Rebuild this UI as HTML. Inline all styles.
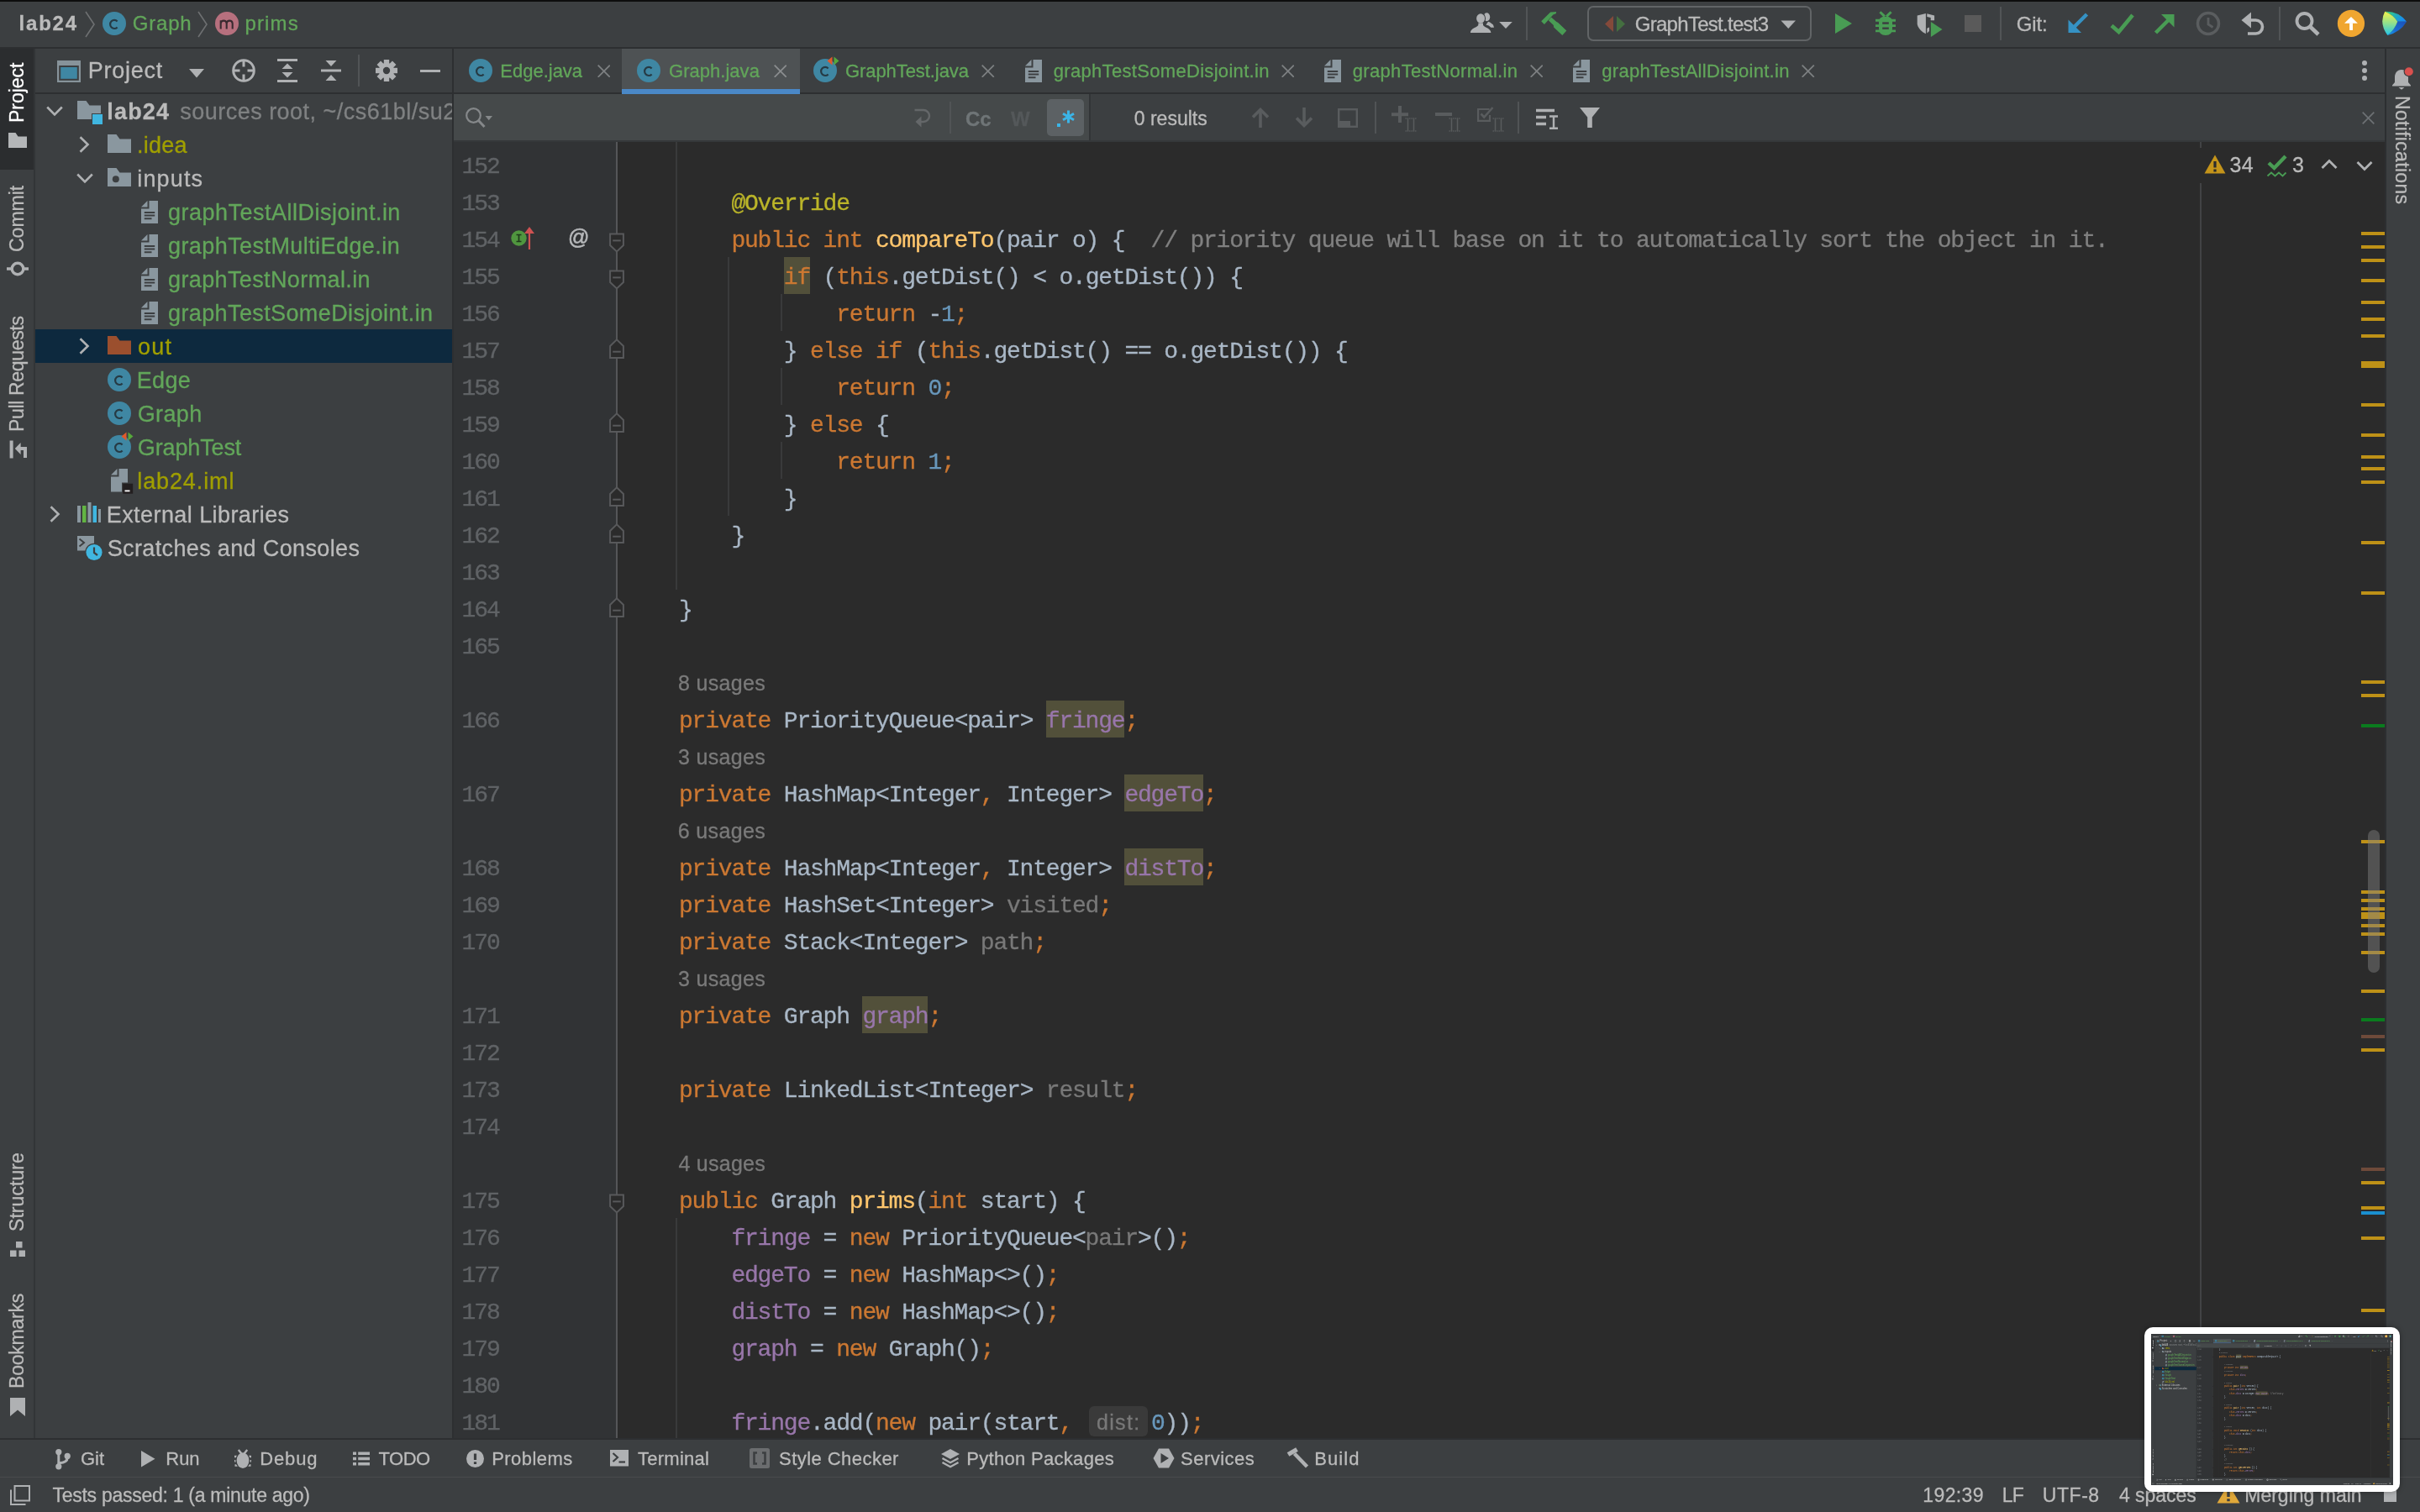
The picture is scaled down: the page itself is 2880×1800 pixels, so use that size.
<!DOCTYPE html>
<html><head><meta charset="utf-8"><title>lab24 - Graph.java</title><style>
html,body{margin:0;padding:0;background:#3c3f41;}
body{width:2880px;height:1800px;position:relative;overflow:hidden;font-family:"Liberation Sans",sans-serif;font-kerning:none;-webkit-font-smoothing:antialiased;}
.r{position:absolute;display:block;}
.t{position:absolute;white-space:pre;font-kerning:none;-webkit-text-stroke:0.3px;}
.ln{letter-spacing:-2.1px !important;margin-left:1.5px;}
.c{position:absolute;white-space:pre;font:28px/44px "Liberation Mono",monospace;letter-spacing:-1.2px;height:44px;-webkit-text-stroke:0.3px currentColor;}
.pg{position:absolute;left:0;top:0;width:2880px;height:1800px;overflow:hidden;will-change:transform;}
</style></head><body>
<div class="pg">
<div class="r" style="left:0.00px;top:0.00px;width:2880.00px;height:1800.00px;background:#3c3f41;"></div>
<div class="r" style="left:0.00px;top:0.00px;width:2880.00px;height:2.00px;background:#0d0d0d;"></div>
<div class="r" style="left:0.00px;top:56.00px;width:2880.00px;height:2.00px;background:#2d2f31;"></div>
<div class="r" style="left:0.00px;top:58.00px;width:40.00px;height:144.00px;background:#2b2d2f;"></div>
<div class="r" style="left:40.00px;top:58.00px;width:2.00px;height:1654.00px;background:#323537;"></div>
<div class="r" style="left:42.00px;top:110.00px;width:496.00px;height:2.00px;background:#2d2f31;"></div>
<div class="r" style="left:538.00px;top:58.00px;width:2.00px;height:1654.00px;background:#2d2f31;"></div>
<div class="r" style="left:540.00px;top:110.00px;width:2298.00px;height:2.00px;background:#2d2f31;"></div>
<div class="r" style="left:740.00px;top:58.00px;width:212.00px;height:48.00px;background:#4e5254;"></div>
<div class="r" style="left:740.00px;top:106.00px;width:212.00px;height:5.50px;background:#4a88c7;"></div>
<div class="r" style="left:540.00px;top:112.00px;width:756.00px;height:56.00px;background:#45494a;"></div>
<div class="r" style="left:1296.00px;top:112.00px;width:2.00px;height:56.00px;background:#323537;"></div>
<div class="r" style="left:540.00px;top:167.00px;width:2298.00px;height:1.50px;background:#35383a;"></div>
<div class="r" style="left:540.00px;top:168.50px;width:2298.00px;height:1543.50px;background:#2b2b2b;"></div>
<div class="r" style="left:540.00px;top:168.50px;width:193.00px;height:1543.50px;background:#313335;"></div>
<div class="r" style="left:733.00px;top:168.50px;width:2.00px;height:1543.50px;background:#555658;"></div>
<div class="r" style="left:2838.00px;top:58.00px;width:2.00px;height:1654.00px;background:#2d2f31;"></div>
<div class="r" style="left:0.00px;top:1712.00px;width:2880.00px;height:2.00px;background:#2d2f31;"></div>
<div class="r" style="left:0.00px;top:1757.50px;width:2880.00px;height:1.50px;background:#494b4d;"></div>
<div class="t" style="left:22.50px;top:15.68px;font:24px/24px 'Liberation Sans',sans-serif;font-weight:bold;letter-spacing:1.812px;color:#bbbbbb;">lab24</div>
<svg class="r" style="left:98.00px;top:10.00px;" width="20" height="40" viewBox="0 0 20 40"><polyline points="4,4 14,19 4,34" fill="none" stroke="#6e7072" stroke-width="1.6"/></svg>
<svg class="r" style="left:122.00px;top:13.50px;" width="28" height="28" viewBox="0 0 28 28"><circle cx="14" cy="14" r="14" fill="#3f87a3"/><path d="M17.600,11.400A4.900,5.100 0 1 0 17.600,18.400" fill="none" stroke="#263a44" stroke-width="2.200"/></svg>
<div class="t" style="left:157.75px;top:15.68px;font:24px/24px 'Liberation Sans',sans-serif;letter-spacing:0.812px;color:#62a65a;">Graph</div>
<svg class="r" style="left:232.00px;top:10.00px;" width="20" height="40" viewBox="0 0 20 40"><polyline points="4,4 14,19 4,34" fill="none" stroke="#6e7072" stroke-width="1.6"/></svg>
<svg class="r" style="left:256.00px;top:13.50px;" width="28" height="28" viewBox="0 0 28 28"><circle cx="14" cy="14" r="14" fill="#b7707e"/><path d="M6.700,20.400V10.200M6.700,13.800C7.200,9.600 13.200,9.600 13.700,13.800V20.400M13.700,13.800C14.200,9.600 20.200,9.600 20.700,13.800V20.400" fill="none" stroke="#3a2a30" stroke-width="2.100"/></svg>
<div class="t" style="left:291.50px;top:15.68px;font:24px/24px 'Liberation Sans',sans-serif;letter-spacing:1.125px;color:#62a65a;">prims</div>
<svg class="r" style="left:1745px;top:10px;" width="60" height="36" viewBox="1745 10 60 36"><ellipse cx="1769.3" cy="20.3" rx="3.9" ry="5" fill="#afb1b3"/><polygon points="1771.1,25.8 1773.1,26.5 1777.0,29.5 1778.0,32.8 1774.4,32.8 1771.7,30.4 1768.4,29.5" fill="#afb1b3" /><ellipse cx="1762.1" cy="22" rx="6" ry="6.6" fill="#3c3f41"/><polygon points="1755.2,30.4 1759.8,28.1 1765.5,28.1 1767.1,30.4 1773.1,33.1 1775.7,39.7 1748.6,39.7 1751.2,33.8" fill="#3c3f41" /><ellipse cx="1762.1" cy="22" rx="5" ry="5.8" fill="#afb1b3"/><path d="M1749.9,38.9 C1750.2,33.8 1757.2,33.1 1759.3,30.1 L1759.3,27.5 L1765.0,27.5 L1765.0,30.1 C1767.1,33.1 1774.0,33.8 1774.4,38.9 Z" fill="#afb1b3"/><polygon points="1784.2,26.0 1799.8,26.0 1792.0,34.1" fill="#afb1b3" /></svg>
<div class="r" style="left:1816.00px;top:8.00px;width:2.00px;height:39.50px;background:#515456;"></div>
<svg class="r" style="left:1830px;top:10px;" width="40" height="36" viewBox="1830 10 40 36"><polygon points="1834.2,25.2 1845.1,14.6 1852.1,13.9 1851.7,16.2 1848.4,17.6 1837.9,29.1" fill="#499c54" /><polygon points="1842.8,24.2 1846.1,20.5 1852.4,26.1 1854.0,26.8 1864.3,36.4 1859.3,42.0 1849.1,32.4 1848.8,30.1" fill="#499c54" /></svg>
<div class="r" style="left:1889px;top:7px;width:266.5px;height:42px;box-sizing:border-box;border:2px solid #616466;border-radius:7px"></div>
<svg class="r" style="left:1908.00px;top:17.00px;" width="28" height="23" viewBox="0 0 28 23"><path d="M2,11.500L12,2V21Z" fill="#84493a"/><path d="M16,2L26,11.500L16,21Z" fill="#446f40"/></svg>
<div class="t" style="left:1945.75px;top:16.68px;font:24px/24px 'Liberation Sans',sans-serif;letter-spacing:-0.714px;color:#bbbbbb;">GraphTest.test3</div>
<svg class="r" style="left:2117.00px;top:22.00px;" width="22" height="14" viewBox="0 0 22 14"><path d="M2.500,2.500h17.500l-8.750,9.500z" fill="#afb1b3"/></svg>
<svg class="r" style="left:2182.00px;top:14.00px;" width="24" height="28" viewBox="0 0 24 28"><path d="M2,2L22,14L2,26Z" fill="#499c54"/></svg>
<svg class="r" style="left:2229.00px;top:13.00px;" width="30" height="30" viewBox="0 0 30 30"><path d="M7,12.500Q7,6.700 15,6.700Q23,6.700 23,12.500V21Q23,29 15,29Q7,29 7,21Z" fill="#499c54"/><path d="M8.400,1.200L13.900,6.600M21.600,1.200L16.100,6.600" stroke="#499c54" stroke-width="3" fill="none"/><path d="M3,11.300H27M3,17.600H27M3,23.900H27" stroke="#499c54" stroke-width="2.900" fill="none"/><rect x="11.200" y="13.300" width="7.600" height="2.500" fill="#3c3f41"/><rect x="11.200" y="19.500" width="7.600" height="2.400" fill="#3c3f41"/></svg>
<svg class="r" style="left:2278px;top:12px;" width="38" height="36" viewBox="2278 12 38 36"><path d="M2291.9,16.0 L2281.7,18.5 L2281.7,28.8 C2282.8,33.8 2286.5,37.9 2291.9,40.2 Z" fill="#afb1b3"/><polygon points="2293.3,16.2 2302.1,18.5 2302.1,24.2 2297.7,24.2 2297.7,20.9 2293.3,20.1" fill="#afb1b3" /><polygon points="2293.3,33.8 2296.0,32.5 2296.0,37.1 2293.3,39.5" fill="#afb1b3" /><polygon points="2297.9,25.9 2311.5,35.0 2297.9,44.1" fill="#499c54" /></svg>
<div class="r" style="left:2338.00px;top:18.00px;width:20.00px;height:20.00px;background:#5a5a5a;"></div>
<div class="r" style="left:2380.00px;top:8.00px;width:2.00px;height:39.50px;background:#515456;"></div>
<div class="t" style="left:2399.75px;top:16.68px;font:24px/24px 'Liberation Sans',sans-serif;letter-spacing:-0.167px;color:#bbbbbb;">Git:</div>
<svg class="r" style="left:2458.00px;top:13.00px;" width="30" height="30" viewBox="0 0 30 30"><path d="M25.500,4L6,23.500" stroke="#3592c4" stroke-width="4.400" fill="none"/><path d="M3.500,26V10.500L7.500,14.500L14.500,21.500L19,26Z" fill="#3592c4"/></svg>
<svg class="r" style="left:2509.00px;top:13.00px;" width="34" height="30" viewBox="0 0 34 30"><polyline points="4,17.500 12.500,25 29,5" stroke="#499c54" stroke-width="4.600" fill="none"/></svg>
<svg class="r" style="left:2561.00px;top:13.00px;" width="30" height="30" viewBox="0 0 30 30"><path d="M4.500,26L24,6.500" stroke="#499c54" stroke-width="4.400" fill="none"/><path d="M26.500,4V19.500L22.500,15.500L15.500,8.500L11,4Z" fill="#499c54"/></svg>
<svg class="r" style="left:2612.00px;top:11.50px;" width="32" height="32" viewBox="0 0 32 32"><circle cx="16" cy="16" r="12.500" fill="none" stroke="#5a5d5f" stroke-width="3.500"/><path d="M16,9V17L21.500,20.500" stroke="#5a5d5f" stroke-width="2.800" fill="none"/></svg>
<svg class="r" style="left:2664.00px;top:12.00px;" width="34" height="32" viewBox="0 0 34 32"><path d="M15,2.500L3.500,12L15,21.500Z" fill="#afb1b3"/><path d="M12,12H20.500a8,8 0 0 1 0,16H11" stroke="#afb1b3" stroke-width="3.600" fill="none"/></svg>
<div class="r" style="left:2712.00px;top:8.00px;width:2.00px;height:39.50px;background:#515456;"></div>
<svg class="r" style="left:2729.00px;top:12.00px;" width="34" height="32" viewBox="0 0 34 32"><circle cx="13.500" cy="13" r="9" fill="none" stroke="#afb1b3" stroke-width="3.800"/><path d="M20,19.500L30,29" stroke="#afb1b3" stroke-width="4.600" fill="none"/></svg>
<svg class="r" style="left:2780px;top:10px;" width="36" height="36" viewBox="2780 10 36 36"><circle cx="2797.95" cy="27.9" r="16.1" fill="#f0a630"/><polygon points="2790.0,27.7 2798.0,19.9 2805.9,27.7" fill="#fff" /><polygon points="2796.1,27.4 2800.0,27.4 2800.0,35.9 2796.1,35.9" fill="#fff" /></svg>
<svg class="r" style="left:2832px;top:10px;" width="36" height="36" viewBox="2832 10 36 36"><defs><linearGradient id="lgA" x1="0" y1="0" x2="0" y2="1"><stop offset="0" stop-color="#f4f24a"/><stop offset="0.5" stop-color="#8fe08e"/><stop offset="1" stop-color="#22c4ea"/></linearGradient><linearGradient id="lgB" x1="0" y1="0" x2="1" y2="0.4"><stop offset="0" stop-color="#3fe070"/><stop offset="0.5" stop-color="#22b0b0"/><stop offset="1" stop-color="#168cf2"/></linearGradient><linearGradient id="lgC" x1="1" y1="0" x2="0" y2="1"><stop offset="0" stop-color="#1c50b8"/><stop offset="0.6" stop-color="#1a6cd0"/><stop offset="1" stop-color="#16a0f0"/></linearGradient></defs><path d="M2838.2,13.8 Q2854.5,13.1 2864.1,25.8 L2853.2,25.8 Q2848.2,17.6 2838.2,13.8 Z" fill="url(#lgB)"/><path d="M2853.2,25.8 L2864.1,25.8 Q2856.4,38.5 2841.4,42.0 Q2850.0,35.4 2853.2,25.8 Z" fill="url(#lgC)"/><path d="M2838.2,13.8 Q2848.2,17.6 2853.2,25.8 Q2850.0,35.4 2841.4,42.0 Q2830.9,27.6 2838.2,13.8 Z" fill="url(#lgA)"/></svg>
<svg class="r" style="left:558.00px;top:70.00px;" width="28" height="28" viewBox="0 0 28 28"><circle cx="14" cy="14" r="14" fill="#3f87a3"/><path d="M17.600,11.400A4.900,5.100 0 1 0 17.600,18.400" fill="none" stroke="#263a44" stroke-width="2.200"/></svg>
<div class="t" style="left:595.25px;top:73.88px;font:22px/22px 'Liberation Sans',sans-serif;letter-spacing:0.000px;color:#62a65a;">Edge.java</div>
<svg class="r" style="left:710.50px;top:76.50px;" width="15.5" height="15.5" viewBox="0 0 15.5 15.5"><path d="M0.700,0.700L14.8,14.8M14.8,0.700L0.700,14.8" stroke="#7d8082" stroke-width="1.8" fill="none"/></svg>
<svg class="r" style="left:758.00px;top:70.00px;" width="28" height="28" viewBox="0 0 28 28"><circle cx="14" cy="14" r="14" fill="#3f87a3"/><path d="M17.600,11.400A4.900,5.100 0 1 0 17.600,18.400" fill="none" stroke="#263a44" stroke-width="2.200"/></svg>
<div class="t" style="left:796.00px;top:73.88px;font:22px/22px 'Liberation Sans',sans-serif;letter-spacing:0.028px;color:#62a65a;">Graph.java</div>
<svg class="r" style="left:920.50px;top:76.50px;" width="15.5" height="15.5" viewBox="0 0 15.5 15.5"><path d="M0.700,0.700L14.8,14.8M14.8,0.700L0.700,14.8" stroke="#8a8d8f" stroke-width="1.8" fill="none"/></svg>
<svg class="r" style="left:968.00px;top:70.00px;" width="28" height="28" viewBox="0 0 28 28"><circle cx="14" cy="14" r="14" fill="#3f87a3"/><path d="M17.600,11.400A4.900,5.100 0 1 0 17.600,18.400" fill="none" stroke="#263a44" stroke-width="2.200"/></svg>
<svg class="r" style="left:984.00px;top:66.50px;" width="15" height="11" viewBox="0 0 15 11"><path d="M0.500,5.500L6.500,0.500V10.500Z" fill="#e05a2b"/><path d="M8.500,0.500L14.500,5.500L8.500,10.500Z" fill="#56a83c"/></svg>
<div class="t" style="left:1006.00px;top:73.88px;font:22px/22px 'Liberation Sans',sans-serif;letter-spacing:-0.077px;color:#62a65a;">GraphTest.java</div>
<svg class="r" style="left:1168.00px;top:76.50px;" width="15.5" height="15.5" viewBox="0 0 15.5 15.5"><path d="M0.700,0.700L14.8,14.8M14.8,0.700L0.700,14.8" stroke="#7d8082" stroke-width="1.8" fill="none"/></svg>
<svg class="r" style="left:1220.00px;top:70.50px;" width="20" height="27.5" viewBox="0 0 20 27.5"><path d="M9.500,0H20V27.500H0V9.500H9.500Z" fill="#8a979f"/><path d="M0,7.500L7.500,0V7.500Z" fill="#8a979f"/><path d="M3.800,14H16.200M3.800,17.600H16.200M3.800,21.200H12.500" stroke="#3c3f41" stroke-width="2" fill="none"/></svg>
<div class="t" style="left:1253.75px;top:73.88px;font:22px/22px 'Liberation Sans',sans-serif;letter-spacing:0.315px;color:#62a65a;">graphTestSomeDisjoint.in</div>
<svg class="r" style="left:1524.50px;top:76.50px;" width="15.5" height="15.5" viewBox="0 0 15.5 15.5"><path d="M0.700,0.700L14.8,14.8M14.8,0.700L0.700,14.8" stroke="#7d8082" stroke-width="1.8" fill="none"/></svg>
<svg class="r" style="left:1576.00px;top:70.50px;" width="20" height="27.5" viewBox="0 0 20 27.5"><path d="M9.500,0H20V27.500H0V9.500H9.500Z" fill="#8a979f"/><path d="M0,7.500L7.500,0V7.500Z" fill="#8a979f"/><path d="M3.800,14H16.200M3.800,17.600H16.200M3.800,21.200H12.500" stroke="#3c3f41" stroke-width="2" fill="none"/></svg>
<div class="t" style="left:1609.75px;top:73.88px;font:22px/22px 'Liberation Sans',sans-serif;letter-spacing:0.324px;color:#62a65a;">graphTestNormal.in</div>
<svg class="r" style="left:1820.50px;top:76.50px;" width="15.5" height="15.5" viewBox="0 0 15.5 15.5"><path d="M0.700,0.700L14.8,14.8M14.8,0.700L0.700,14.8" stroke="#7d8082" stroke-width="1.8" fill="none"/></svg>
<svg class="r" style="left:1872.00px;top:70.50px;" width="20" height="27.5" viewBox="0 0 20 27.5"><path d="M9.500,0H20V27.500H0V9.500H9.500Z" fill="#8a979f"/><path d="M0,7.500L7.500,0V7.500Z" fill="#8a979f"/><path d="M3.800,14H16.200M3.800,17.600H16.200M3.800,21.200H12.500" stroke="#3c3f41" stroke-width="2" fill="none"/></svg>
<div class="t" style="left:1906.25px;top:73.88px;font:22px/22px 'Liberation Sans',sans-serif;letter-spacing:0.307px;color:#62a65a;">graphTestAllDisjoint.in</div>
<svg class="r" style="left:2144.00px;top:76.50px;" width="15.5" height="15.5" viewBox="0 0 15.5 15.5"><path d="M0.700,0.700L14.8,14.8M14.8,0.700L0.700,14.8" stroke="#7d8082" stroke-width="1.8" fill="none"/></svg>
<div class="r" style="left:2811px;top:72px;width:6px;height:6px;border-radius:3px;background:#afb1b3"></div>
<div class="r" style="left:2811px;top:81px;width:6px;height:6px;border-radius:3px;background:#afb1b3"></div>
<div class="r" style="left:2811px;top:90px;width:6px;height:6px;border-radius:3px;background:#afb1b3"></div>
<svg class="r" style="left:552.00px;top:126.00px;" width="38" height="28" viewBox="0 0 38 28"><circle cx="11.500" cy="11.500" r="8.300" fill="none" stroke="#85888a" stroke-width="2.200"/><path d="M17.500,17.500L24.500,25" stroke="#85888a" stroke-width="3" fill="none"/><path d="M25.500,12H34L29.750,17.200Z" fill="#85888a"/></svg>
<svg class="r" style="left:1086.00px;top:128.00px;" width="24" height="25" viewBox="0 0 24 25"><path d="M2.500,3H13a7,7 0 0 1 0,14H5" stroke="#646769" stroke-width="2.400" fill="none"/><path d="M10.500,10.500L3.500,17L10.500,23.500Z" fill="#646769"/></svg>
<div class="r" style="left:1130.00px;top:120.50px;width:2.00px;height:38.50px;background:#515456;"></div>
<div class="t" style="left:1149.00px;top:130.18px;font:24px/24px 'Liberation Sans',sans-serif;font-weight:bold;letter-spacing:0.000px;color:#6f7577;">Cc</div>
<div class="t" style="left:1203.00px;top:130.18px;font:24px/24px 'Liberation Sans',sans-serif;font-weight:bold;letter-spacing:0.000px;color:#54585a;">W</div>
<div class="r" style="left:1246px;top:118px;width:44px;height:44px;border-radius:5px;background:#5c6164"></div>
<div class="r" style="left:1258.00px;top:146.50px;width:4.00px;height:4.00px;background:#3bb5e8;"></div>
<svg class="r" style="left:1264.00px;top:130.50px;" width="15" height="16" viewBox="0 0 15 16"><path d="M7.500,0.500V15.500M1,4.200L14,11.800M14,4.200L1,11.800" stroke="#3bb5e8" stroke-width="3" fill="none"/></svg>
<div class="t" style="left:1349.75px;top:129.83px;font:23px/23px 'Liberation Sans',sans-serif;letter-spacing:0.000px;color:#bbbbbb;">0 results</div>
<svg class="r" style="left:1488.00px;top:127.00px;" width="24" height="26" viewBox="0 0 24 26"><path d="M12,25V4" stroke="#595c5e" stroke-width="3.600" fill="none"/><path d="M3,12.500L12,3.500L21,12.500" stroke="#595c5e" stroke-width="3.600" fill="none"/></svg>
<svg class="r" style="left:1540.00px;top:127.00px;" width="24" height="26" viewBox="0 0 24 26"><path d="M12,1V22" stroke="#595c5e" stroke-width="3.600" fill="none"/><path d="M3,13.500L12,22.500L21,13.500" stroke="#595c5e" stroke-width="3.600" fill="none"/></svg>
<svg class="r" style="left:1592.00px;top:128.50px;" width="24" height="23" viewBox="0 0 24 23"><rect x="1.100" y="1.100" width="21.800" height="20.800" fill="none" stroke="#595c5e" stroke-width="2.600"/><rect x="1" y="15" width="14" height="7.500" fill="#595c5e"/></svg>
<div class="r" style="left:1636.00px;top:120.50px;width:2.00px;height:38.50px;background:#515456;"></div>
<svg class="r" style="left:1656.00px;top:126.00px;" width="20" height="20" viewBox="0 0 20 20"><path d="M10,0V20M0,10.300H20" stroke="#595c5e" stroke-width="4" fill="none"/></svg>
<svg class="r" style="left:1672.30px;top:139.50px;" width="14" height="17" viewBox="0 0 14 17"><path d="M3.500,1V16M10.500,1V16" stroke="#595c5e" stroke-width="1.500" fill="none"/><path d="M0.500,1H6.500M7.500,1H13.500M0.500,16H6.500M7.500,16H13.500" stroke="#595c5e" stroke-width="1.600" fill="none" stroke-dasharray="1.400,0.900"/></svg>
<div class="r" style="left:1707.50px;top:134.30px;width:20.00px;height:4.00px;background:#595c5e;"></div>
<svg class="r" style="left:1724.00px;top:139.50px;" width="14" height="17" viewBox="0 0 14 17"><path d="M3.500,1V16M10.500,1V16" stroke="#595c5e" stroke-width="1.500" fill="none"/><path d="M0.500,1H6.500M7.500,1H13.500M0.500,16H6.500M7.500,16H13.500" stroke="#595c5e" stroke-width="1.600" fill="none" stroke-dasharray="1.400,0.900"/></svg>
<svg class="r" style="left:1757.00px;top:126.00px;" width="22" height="20" viewBox="0 0 22 20"><path d="M15.500,4H2.100V17.800H16V11" stroke="#595c5e" stroke-width="2.200" fill="none"/><path d="M5.500,9.500L9.200,13.500L19.500,2" stroke="#595c5e" stroke-width="2.600" fill="none"/></svg>
<svg class="r" style="left:1776.00px;top:139.50px;" width="14" height="17" viewBox="0 0 14 17"><path d="M3.500,1V16M10.500,1V16" stroke="#595c5e" stroke-width="1.500" fill="none"/><path d="M0.500,1H6.500M7.500,1H13.500M0.500,16H6.500M7.500,16H13.500" stroke="#595c5e" stroke-width="1.600" fill="none" stroke-dasharray="1.400,0.900"/></svg>
<div class="r" style="left:1806.00px;top:120.50px;width:2.00px;height:38.50px;background:#515456;"></div>
<svg class="r" style="left:1828.00px;top:129.00px;" width="27" height="26" viewBox="0 0 27 26"><path d="M0,2.500H22M0,10.500H12M0,18.500H12" stroke="#afb1b3" stroke-width="3.600" fill="none"/><path d="M21,9V24M16,9.500H26M16,23.800H26" stroke="#afb1b3" stroke-width="2.400" fill="none"/></svg>
<svg class="r" style="left:1880.00px;top:128.00px;" width="24" height="24" viewBox="0 0 24 24"><path d="M0,0H24L14.800,11.500V24H9.200V11.500Z" fill="#afb1b3"/></svg>
<svg class="r" style="left:2810.50px;top:133.00px;" width="15" height="15" viewBox="0 0 15 15"><path d="M0.700,0.700L14.3,14.3M14.3,0.700L0.700,14.3" stroke="#6c7073" stroke-width="1.8" fill="none"/></svg>
<div class="t" style="left:9.03px;top:145.75px;transform-origin:0 0;transform:rotate(-90deg);font:23px/23px 'Liberation Sans',sans-serif;letter-spacing:-0.042px;color:#ffffff;">Project</div>
<svg class="r" style="left:10.00px;top:158.00px;" width="22" height="18" viewBox="0 0 22 18"><path d="M0,0H8.500L11.500,4.500H22V18H0Z" fill="#b4b6b8"/></svg>
<div class="t" style="left:9.03px;top:300.00px;transform-origin:0 0;transform:rotate(-90deg);font:23px/23px 'Liberation Sans',sans-serif;letter-spacing:0.000px;color:#bbbbbb;">Commit</div>
<svg class="r" style="left:8.00px;top:307.00px;" width="26" height="26" viewBox="0 0 26 26"><circle cx="13" cy="13" r="6.800" fill="none" stroke="#afb1b3" stroke-width="3.400"/><path d="M0,13H6M20,13H26" stroke="#afb1b3" stroke-width="3.400"/></svg>
<div class="t" style="left:9.03px;top:514.25px;transform-origin:0 0;transform:rotate(-90deg);font:23px/23px 'Liberation Sans',sans-serif;letter-spacing:-0.333px;color:#bbbbbb;">Pull Requests</div>
<svg class="r" style="left:8px;top:520px;" width="28" height="30" viewBox="8 520 28 30"><rect x="11.6" y="524.5" width="4" height="21" fill="#afb1b3"/><path d="M17.8,534L24.6,527V541Z" fill="#afb1b3"/><path d="M24,534H30V545" stroke="#afb1b3" stroke-width="4" fill="none"/></svg>
<div class="t" style="left:9.03px;top:1465.50px;transform-origin:0 0;transform:rotate(-90deg);font:23px/23px 'Liberation Sans',sans-serif;letter-spacing:0.069px;color:#bbbbbb;">Structure</div>
<svg class="r" style="left:12.00px;top:1478.00px;" width="18" height="18" viewBox="0 0 18 18"><rect x="7" y="0" width="7.500" height="7.500" fill="#afb1b3"/><rect x="0" y="10.500" width="7.500" height="7.500" fill="#afb1b3"/><rect x="10.500" y="10.500" width="7.500" height="7.500" fill="#afb1b3"/></svg>
<div class="t" style="left:9.03px;top:1653.25px;transform-origin:0 0;transform:rotate(-90deg);font:23px/23px 'Liberation Sans',sans-serif;letter-spacing:-0.213px;color:#bbbbbb;">Bookmarks</div>
<svg class="r" style="left:12.00px;top:1664.00px;" width="18" height="22" viewBox="0 0 18 22"><path d="M0,0H18V22L9,14.500L0,22Z" fill="#afb1b3"/></svg>
<svg class="r" style="left:68.00px;top:72.00px;" width="28" height="26" viewBox="0 0 28 26"><rect x="0" y="0" width="28" height="26" fill="#87939a"/><rect x="2.200" y="6" width="23.600" height="17.800" fill="#3c3f41"/><rect x="4.200" y="8" width="19.600" height="13.800" fill="#3f87a3"/></svg>
<div class="t" style="left:104.75px;top:71.14px;font:27px/27px 'Liberation Sans',sans-serif;letter-spacing:0.750px;color:#bbbbbb;">Project</div>
<svg class="r" style="left:224.00px;top:81.00px;" width="20" height="13" viewBox="0 0 20 13"><path d="M1,1H19L10,11.500Z" fill="#afb1b3"/></svg>
<svg class="r" style="left:276.00px;top:70.00px;" width="28" height="28" viewBox="0 0 28 28"><circle cx="14" cy="14" r="12.300" fill="none" stroke="#afb1b3" stroke-width="3"/><path d="M14,1V9.500M14,18.500V27M1,14H9.500M18.500,14H27" stroke="#afb1b3" stroke-width="3" fill="none"/></svg>
<svg class="r" style="left:330.00px;top:70.00px;" width="24" height="28" viewBox="0 0 24 28"><path d="M0,1.500H24M0,26.500H24" stroke="#afb1b3" stroke-width="3"/><path d="M5.500,12L12,5.500L18.500,12ZM5.500,16L12,22.500L18.500,16Z" fill="#afb1b3"/></svg>
<svg class="r" style="left:382.00px;top:70.00px;" width="24" height="28" viewBox="0 0 24 28"><path d="M0,14H24" stroke="#afb1b3" stroke-width="3"/><path d="M5.500,2L12,9L18.500,2ZM5.500,26L12,19L18.500,26Z" fill="#afb1b3"/></svg>
<div class="r" style="left:426.00px;top:64.50px;width:2.00px;height:38.50px;background:#515456;"></div>
<svg class="r" style="left:447.00px;top:71.00px;" width="26" height="26" viewBox="0 0 26 26"><g transform="translate(13,13)"><rect x="-3.200" y="-13" width="6.400" height="7" fill="#afb1b3" transform="rotate(0)"/><rect x="-3.200" y="-13" width="6.400" height="7" fill="#afb1b3" transform="rotate(45)"/><rect x="-3.200" y="-13" width="6.400" height="7" fill="#afb1b3" transform="rotate(90)"/><rect x="-3.200" y="-13" width="6.400" height="7" fill="#afb1b3" transform="rotate(135)"/><rect x="-3.200" y="-13" width="6.400" height="7" fill="#afb1b3" transform="rotate(180)"/><rect x="-3.200" y="-13" width="6.400" height="7" fill="#afb1b3" transform="rotate(225)"/><rect x="-3.200" y="-13" width="6.400" height="7" fill="#afb1b3" transform="rotate(270)"/><rect x="-3.200" y="-13" width="6.400" height="7" fill="#afb1b3" transform="rotate(315)"/><circle r="9.200" fill="#afb1b3"/><circle r="4.200" fill="#3c3f41"/></g></svg>
<div class="r" style="left:500.00px;top:82.50px;width:24.00px;height:3.00px;background:#afb1b3;"></div>
<div class="r" style="left:42.00px;top:392.00px;width:496.00px;height:40.00px;background:#0d293e;"></div>
<svg class="r" style="left:55.00px;top:125.50px;" width="20" height="13" viewBox="0 0 20 13"><polyline points="1.200,1.500 10,10.500 18.800,1.500" fill="none" stroke="#afb1b3" stroke-width="2.600"/></svg>
<svg class="r" style="left:92.00px;top:120.00px;" width="28" height="22" viewBox="0 0 28 22"><path d="M0,0H10.500L14.500,5.500H28V22H0Z" fill="#8a979f"/></svg>
<div class="r" style="left:108.50px;top:134.50px;width:15.00px;height:15.00px;background:#3c3f41;"></div>
<div class="r" style="left:110.00px;top:136.00px;width:12.00px;height:12.00px;background:#40b6e0;"></div>
<div class="t" style="left:127.25px;top:120.14px;font:27px/27px 'Liberation Sans',sans-serif;font-weight:bold;letter-spacing:1.188px;color:#bbbbbb;">lab24</div>
<div class="r" style="left:0;top:0;width:538px;height:1800px;overflow:hidden;background:none"><div class="t" style="left:214.25px;top:120.14px;font:27px/27px 'Liberation Sans',sans-serif;letter-spacing:0.480px;color:#7f8182;">sources root, ~/cs61bl/su2</div></div>
<svg class="r" style="left:94.00px;top:162.00px;" width="13" height="20" viewBox="0 0 13 20"><polyline points="1.500,1.200 10.500,10 1.500,18.800" fill="none" stroke="#afb1b3" stroke-width="2.600"/></svg>
<svg class="r" style="left:128.00px;top:160.00px;" width="28" height="22" viewBox="0 0 28 22"><path d="M0,0H10.500L14.500,5.500H28V22H0Z" fill="#8a979f"/></svg>
<div class="t" style="left:163.10px;top:160.14px;font:27px/27px 'Liberation Sans',sans-serif;letter-spacing:0.225px;color:#a09f00;">.idea</div>
<svg class="r" style="left:91.00px;top:205.50px;" width="20" height="13" viewBox="0 0 20 13"><polyline points="1.200,1.500 10,10.500 18.800,1.500" fill="none" stroke="#afb1b3" stroke-width="2.600"/></svg>
<svg class="r" style="left:128.00px;top:200.00px;" width="28" height="22" viewBox="0 0 28 22"><path d="M0,0H10.500L14.500,5.500H28V22H0Z" fill="#8a979f"/><circle cx="9.800" cy="13.200" r="4" fill="#3c3f41"/></svg>
<div class="t" style="left:163.25px;top:200.14px;font:27px/27px 'Liberation Sans',sans-serif;letter-spacing:1.150px;color:#bbbbbb;">inputs</div>
<svg class="r" style="left:168.00px;top:238.50px;" width="20" height="27.5" viewBox="0 0 20 27.5"><path d="M9.500,0H20V27.500H0V9.500H9.500Z" fill="#8a979f"/><path d="M0,7.500L7.500,0V7.500Z" fill="#8a979f"/><path d="M3.800,14H16.200M3.800,17.600H16.200M3.800,21.200H12.500" stroke="#3c3f41" stroke-width="2" fill="none"/></svg>
<div class="t" style="left:200.00px;top:240.14px;font:27px/27px 'Liberation Sans',sans-serif;letter-spacing:0.489px;color:#62a65a;">graphTestAllDisjoint.in</div>
<svg class="r" style="left:168.00px;top:278.50px;" width="20" height="27.5" viewBox="0 0 20 27.5"><path d="M9.500,0H20V27.500H0V9.500H9.500Z" fill="#8a979f"/><path d="M0,7.500L7.500,0V7.500Z" fill="#8a979f"/><path d="M3.800,14H16.200M3.800,17.600H16.200M3.800,21.200H12.500" stroke="#3c3f41" stroke-width="2" fill="none"/></svg>
<div class="t" style="left:200.00px;top:280.14px;font:27px/27px 'Liberation Sans',sans-serif;letter-spacing:0.425px;color:#62a65a;">graphTestMultiEdge.in</div>
<svg class="r" style="left:168.00px;top:318.50px;" width="20" height="27.5" viewBox="0 0 20 27.5"><path d="M9.500,0H20V27.500H0V9.500H9.500Z" fill="#8a979f"/><path d="M0,7.500L7.500,0V7.500Z" fill="#8a979f"/><path d="M3.800,14H16.200M3.800,17.600H16.200M3.800,21.200H12.500" stroke="#3c3f41" stroke-width="2" fill="none"/></svg>
<div class="t" style="left:200.00px;top:320.14px;font:27px/27px 'Liberation Sans',sans-serif;letter-spacing:0.379px;color:#62a65a;">graphTestNormal.in</div>
<svg class="r" style="left:168.00px;top:358.50px;" width="20" height="27.5" viewBox="0 0 20 27.5"><path d="M9.500,0H20V27.500H0V9.500H9.500Z" fill="#8a979f"/><path d="M0,7.500L7.500,0V7.500Z" fill="#8a979f"/><path d="M3.800,14H16.200M3.800,17.600H16.200M3.800,21.200H12.500" stroke="#3c3f41" stroke-width="2" fill="none"/></svg>
<div class="t" style="left:200.00px;top:360.14px;font:27px/27px 'Liberation Sans',sans-serif;letter-spacing:0.387px;color:#62a65a;">graphTestSomeDisjoint.in</div>
<svg class="r" style="left:94.00px;top:402.00px;" width="13" height="20" viewBox="0 0 13 20"><polyline points="1.500,1.200 10.500,10 1.500,18.800" fill="none" stroke="#afb1b3" stroke-width="2.600"/></svg>
<svg class="r" style="left:128.00px;top:400.00px;" width="28" height="22" viewBox="0 0 28 22"><path d="M0,0H10.500L14.500,5.500H28V22H0Z" fill="#9b4f2e"/></svg>
<div class="t" style="left:164.00px;top:400.14px;font:27px/27px 'Liberation Sans',sans-serif;letter-spacing:1.225px;color:#a09f00;">out</div>
<svg class="r" style="left:128.00px;top:438.00px;" width="28" height="28" viewBox="0 0 28 28"><circle cx="14" cy="14" r="14" fill="#3f87a3"/><path d="M17.600,11.400A4.900,5.100 0 1 0 17.600,18.400" fill="none" stroke="#263a44" stroke-width="2.200"/></svg>
<div class="t" style="left:162.75px;top:440.14px;font:27px/27px 'Liberation Sans',sans-serif;letter-spacing:0.317px;color:#62a65a;">Edge</div>
<svg class="r" style="left:128.00px;top:478.00px;" width="28" height="28" viewBox="0 0 28 28"><circle cx="14" cy="14" r="14" fill="#3f87a3"/><path d="M17.600,11.400A4.900,5.100 0 1 0 17.600,18.400" fill="none" stroke="#263a44" stroke-width="2.200"/></svg>
<div class="t" style="left:163.75px;top:480.14px;font:27px/27px 'Liberation Sans',sans-serif;letter-spacing:0.350px;color:#62a65a;">Graph</div>
<svg class="r" style="left:128.00px;top:518.00px;" width="28" height="28" viewBox="0 0 28 28"><circle cx="14" cy="14" r="14" fill="#3f87a3"/><path d="M17.600,11.400A4.900,5.100 0 1 0 17.600,18.400" fill="none" stroke="#263a44" stroke-width="2.200"/></svg>
<svg class="r" style="left:143.50px;top:514.00px;" width="15" height="11" viewBox="0 0 15 11"><path d="M0.500,5.500L6.500,0.500V10.500Z" fill="#e05a2b"/><path d="M8.500,0.500L14.500,5.500L8.500,10.500Z" fill="#56a83c"/></svg>
<div class="t" style="left:163.75px;top:520.14px;font:27px/27px 'Liberation Sans',sans-serif;letter-spacing:-0.125px;color:#62a65a;">GraphTest</div>
<svg class="r" style="left:132.00px;top:558.00px;" width="28" height="30" viewBox="0 0 28 30"><path d="M9.500,0H20V27.500H0V9.500H9.500Z" fill="#8a979f"/><path d="M0,7.500L7.500,0V7.500Z" fill="#8a979f"/><rect x="13" y="16.500" width="14" height="14" fill="#3c3f41"/><rect x="14.200" y="17.700" width="12" height="12" fill="#231f20"/><rect x="16.500" y="25.500" width="6" height="1.800" fill="#fff"/></svg>
<div class="t" style="left:163.25px;top:560.14px;font:27px/27px 'Liberation Sans',sans-serif;letter-spacing:0.888px;color:#a09f00;">lab24.iml</div>
<svg class="r" style="left:59.00px;top:602.00px;" width="13" height="20" viewBox="0 0 13 20"><polyline points="1.500,1.200 10.500,10 1.500,18.800" fill="none" stroke="#afb1b3" stroke-width="2.600"/></svg>
<svg class="r" style="left:92.00px;top:598.00px;" width="28" height="24" viewBox="0 0 28 24"><rect x="0" y="4" width="4" height="20" fill="#8a979f"/><rect x="6" y="4" width="4.500" height="20" fill="#62b543"/><rect x="12.500" y="0" width="4" height="24" fill="#8a979f"/><rect x="18.500" y="4" width="4.500" height="20" fill="#40b6e0"/><rect x="25" y="8" width="3" height="16" fill="#8a979f"/></svg>
<div class="t" style="left:126.75px;top:600.14px;font:27px/27px 'Liberation Sans',sans-serif;letter-spacing:0.426px;color:#bbbbbb;">External Libraries</div>
<svg class="r" style="left:92.00px;top:638.00px;" width="31" height="30" viewBox="0 0 31 30"><rect x="0" y="0" width="20" height="17.500" fill="#8a979f"/><path d="M2.500,3.500L8,8L2.500,12.500" stroke="#3c3f41" stroke-width="2" fill="none"/><circle cx="20" cy="19.500" r="10.800" fill="#3c3f41"/><circle cx="20" cy="19.500" r="9.600" fill="#40b6e0"/><path d="M20,13.500V20L24,23" stroke="#3c3f41" stroke-width="2.200" fill="none"/></svg>
<div class="t" style="left:127.75px;top:640.14px;font:27px/27px 'Liberation Sans',sans-serif;letter-spacing:0.357px;color:#bbbbbb;">Scratches and Consoles</div>
<svg class="r" style="left:2846.00px;top:80.00px;" width="26" height="27" viewBox="0 0 26 27"><path d="M12,3C17.500,3 20,7.500 20,12V18L23,21.500V22.500H1V21.500L4,18V12C4,7.500 6.500,3 12,3Z" fill="#afb1b3"/><path d="M8.500,24H15.500L12,26.800Z" fill="#afb1b3"/><circle cx="20.800" cy="5.200" r="6.200" fill="#3c3f41"/><circle cx="20.800" cy="5.200" r="5" fill="#d9504e"/></svg>
<div class="t" style="left:2870.47px;top:113.75px;transform-origin:0 0;transform:rotate(90deg);font:23px/23px 'Liberation Sans',sans-serif;letter-spacing:0.312px;color:#bbbbbb;">Notifications</div>
<div class="r" style="left:540px;top:168.5px;width:2298px;height:1543.5px;overflow:hidden"><div class="r" style="left:-540px;top:-168.5px;width:2880px;height:1800px">
<div class="r" style="left:803.80px;top:168.50px;width:2.00px;height:533.50px;background:#393a3b;"></div>
<div class="r" style="left:866.20px;top:306.00px;width:2.00px;height:308.00px;background:#393a3b;"></div>
<div class="r" style="left:928.60px;top:350.00px;width:2.00px;height:44.00px;background:#393a3b;"></div>
<div class="r" style="left:928.60px;top:438.00px;width:2.00px;height:44.00px;background:#393a3b;"></div>
<div class="r" style="left:928.60px;top:526.00px;width:2.00px;height:44.00px;background:#393a3b;"></div>
<div class="r" style="left:803.80px;top:1450.00px;width:2.00px;height:262.00px;background:#393a3b;"></div>
<div class="r" style="left:2617.50px;top:168.50px;width:2.00px;height:1543.50px;background:#424345;"></div>
<div class="r" style="left:932.80px;top:306.00px;width:31.20px;height:44.00px;background:#52503a;"></div>
<div class="r" style="left:1244.80px;top:834.00px;width:93.60px;height:44.00px;background:#52503a;"></div>
<div class="r" style="left:1338.40px;top:922.00px;width:93.60px;height:44.00px;background:#52503a;"></div>
<div class="r" style="left:1338.40px;top:1010.00px;width:93.60px;height:44.00px;background:#52503a;"></div>
<div class="r" style="left:1026.40px;top:1186.00px;width:78.00px;height:44.00px;background:#52503a;"></div>
<div class="c ln" style="left:548.00px;top:176.50px;color:#606366">152</div>
<div class="c ln" style="left:548.00px;top:220.50px;color:#606366">153</div>
<div class="c" style="left:870.40px;top:220.50px;color:#bbb529">@Override</div>
<div class="c ln" style="left:548.00px;top:264.50px;color:#606366">154</div>
<div class="c" style="left:870.40px;top:264.50px;color:#cc7832">public int </div>
<div class="c" style="left:1042.00px;top:264.50px;color:#ffc66d">compareTo</div>
<div class="c" style="left:1182.40px;top:264.50px;color:#a9b7c6">(pair o) {</div>
<div class="c" style="left:1369.60px;top:264.50px;color:#808080">// priority queue will base on it to automatically sort the object in it.</div>
<div class="c ln" style="left:548.00px;top:308.50px;color:#606366">155</div>
<div class="c" style="left:932.80px;top:308.50px;color:#cc7832">if</div>
<div class="c" style="left:979.60px;top:308.50px;color:#a9b7c6">(</div>
<div class="c" style="left:995.20px;top:308.50px;color:#cc7832">this</div>
<div class="c" style="left:1057.60px;top:308.50px;color:#a9b7c6">.getDist() &lt; o.getDist()) {</div>
<div class="c ln" style="left:548.00px;top:352.50px;color:#606366">156</div>
<div class="c" style="left:995.20px;top:352.50px;color:#cc7832">return</div>
<div class="c" style="left:1104.40px;top:352.50px;color:#a9b7c6">-</div>
<div class="c" style="left:1120.00px;top:352.50px;color:#6897bb">1</div>
<div class="c" style="left:1135.60px;top:352.50px;color:#cc7832">;</div>
<div class="c ln" style="left:548.00px;top:396.50px;color:#606366">157</div>
<div class="c" style="left:932.80px;top:396.50px;color:#a9b7c6">}</div>
<div class="c" style="left:964.00px;top:396.50px;color:#cc7832">else if</div>
<div class="c" style="left:1088.80px;top:396.50px;color:#a9b7c6">(</div>
<div class="c" style="left:1104.40px;top:396.50px;color:#cc7832">this</div>
<div class="c" style="left:1166.80px;top:396.50px;color:#a9b7c6">.getDist() == o.getDist()) {</div>
<div class="c ln" style="left:548.00px;top:440.50px;color:#606366">158</div>
<div class="c" style="left:995.20px;top:440.50px;color:#cc7832">return</div>
<div class="c" style="left:1104.40px;top:440.50px;color:#6897bb">0</div>
<div class="c" style="left:1120.00px;top:440.50px;color:#cc7832">;</div>
<div class="c ln" style="left:548.00px;top:484.50px;color:#606366">159</div>
<div class="c" style="left:932.80px;top:484.50px;color:#a9b7c6">}</div>
<div class="c" style="left:964.00px;top:484.50px;color:#cc7832">else</div>
<div class="c" style="left:1042.00px;top:484.50px;color:#a9b7c6">{</div>
<div class="c ln" style="left:548.00px;top:528.50px;color:#606366">160</div>
<div class="c" style="left:995.20px;top:528.50px;color:#cc7832">return</div>
<div class="c" style="left:1104.40px;top:528.50px;color:#6897bb">1</div>
<div class="c" style="left:1120.00px;top:528.50px;color:#cc7832">;</div>
<div class="c ln" style="left:548.00px;top:572.50px;color:#606366">161</div>
<div class="c" style="left:932.80px;top:572.50px;color:#a9b7c6">}</div>
<div class="c ln" style="left:548.00px;top:616.50px;color:#606366">162</div>
<div class="c" style="left:870.40px;top:616.50px;color:#a9b7c6">}</div>
<div class="c ln" style="left:548.00px;top:660.50px;color:#606366">163</div>
<div class="c ln" style="left:548.00px;top:704.50px;color:#606366">164</div>
<div class="c" style="left:808.00px;top:704.50px;color:#a9b7c6">}</div>
<div class="c ln" style="left:548.00px;top:748.50px;color:#606366">165</div>
<div class="t" style="left:807.00px;top:801.34px;font:25px/25px 'Liberation Sans',sans-serif;letter-spacing:0.321px;color:#7a7a7a;">8 usages</div>
<div class="c ln" style="left:548.00px;top:836.50px;color:#606366">166</div>
<div class="c" style="left:808.00px;top:836.50px;color:#cc7832">private</div>
<div class="c" style="left:932.80px;top:836.50px;color:#a9b7c6">PriorityQueue&lt;pair&gt;</div>
<div class="c" style="left:1244.80px;top:836.50px;color:#9876aa">fringe</div>
<div class="c" style="left:1338.40px;top:836.50px;color:#cc7832">;</div>
<div class="t" style="left:807.00px;top:889.34px;font:25px/25px 'Liberation Sans',sans-serif;letter-spacing:0.321px;color:#7a7a7a;">3 usages</div>
<div class="c ln" style="left:548.00px;top:924.50px;color:#606366">167</div>
<div class="c" style="left:808.00px;top:924.50px;color:#cc7832">private</div>
<div class="c" style="left:932.80px;top:924.50px;color:#a9b7c6">HashMap&lt;Integer</div>
<div class="c" style="left:1166.80px;top:924.50px;color:#cc7832">,</div>
<div class="c" style="left:1198.00px;top:924.50px;color:#a9b7c6">Integer&gt;</div>
<div class="c" style="left:1338.40px;top:924.50px;color:#9876aa">edgeTo</div>
<div class="c" style="left:1432.00px;top:924.50px;color:#cc7832">;</div>
<div class="t" style="left:806.75px;top:977.34px;font:25px/25px 'Liberation Sans',sans-serif;letter-spacing:0.357px;color:#7a7a7a;">6 usages</div>
<div class="c ln" style="left:548.00px;top:1012.50px;color:#606366">168</div>
<div class="c" style="left:808.00px;top:1012.50px;color:#cc7832">private</div>
<div class="c" style="left:932.80px;top:1012.50px;color:#a9b7c6">HashMap&lt;Integer</div>
<div class="c" style="left:1166.80px;top:1012.50px;color:#cc7832">,</div>
<div class="c" style="left:1198.00px;top:1012.50px;color:#a9b7c6">Integer&gt;</div>
<div class="c" style="left:1338.40px;top:1012.50px;color:#9876aa">distTo</div>
<div class="c" style="left:1432.00px;top:1012.50px;color:#cc7832">;</div>
<div class="c ln" style="left:548.00px;top:1056.50px;color:#606366">169</div>
<div class="c" style="left:808.00px;top:1056.50px;color:#cc7832">private</div>
<div class="c" style="left:932.80px;top:1056.50px;color:#a9b7c6">HashSet&lt;Integer&gt;</div>
<div class="c" style="left:1198.00px;top:1056.50px;color:#787878">visited</div>
<div class="c" style="left:1307.20px;top:1056.50px;color:#cc7832">;</div>
<div class="c ln" style="left:548.00px;top:1100.50px;color:#606366">170</div>
<div class="c" style="left:808.00px;top:1100.50px;color:#cc7832">private</div>
<div class="c" style="left:932.80px;top:1100.50px;color:#a9b7c6">Stack&lt;Integer&gt;</div>
<div class="c" style="left:1166.80px;top:1100.50px;color:#787878">path</div>
<div class="c" style="left:1229.20px;top:1100.50px;color:#cc7832">;</div>
<div class="t" style="left:807.00px;top:1153.34px;font:25px/25px 'Liberation Sans',sans-serif;letter-spacing:0.321px;color:#7a7a7a;">3 usages</div>
<div class="c ln" style="left:548.00px;top:1188.50px;color:#606366">171</div>
<div class="c" style="left:808.00px;top:1188.50px;color:#cc7832">private</div>
<div class="c" style="left:932.80px;top:1188.50px;color:#a9b7c6">Graph</div>
<div class="c" style="left:1026.40px;top:1188.50px;color:#9876aa">graph</div>
<div class="c" style="left:1104.40px;top:1188.50px;color:#cc7832">;</div>
<div class="c ln" style="left:548.00px;top:1232.50px;color:#606366">172</div>
<div class="c ln" style="left:548.00px;top:1276.50px;color:#606366">173</div>
<div class="c" style="left:808.00px;top:1276.50px;color:#cc7832">private</div>
<div class="c" style="left:932.80px;top:1276.50px;color:#a9b7c6">LinkedList&lt;Integer&gt;</div>
<div class="c" style="left:1244.80px;top:1276.50px;color:#787878">result</div>
<div class="c" style="left:1338.40px;top:1276.50px;color:#cc7832">;</div>
<div class="c ln" style="left:548.00px;top:1320.50px;color:#606366">174</div>
<div class="t" style="left:807.50px;top:1373.34px;font:25px/25px 'Liberation Sans',sans-serif;letter-spacing:0.250px;color:#7a7a7a;">4 usages</div>
<div class="c ln" style="left:548.00px;top:1408.50px;color:#606366">175</div>
<div class="c" style="left:808.00px;top:1408.50px;color:#cc7832">public</div>
<div class="c" style="left:917.20px;top:1408.50px;color:#a9b7c6">Graph</div>
<div class="c" style="left:1010.80px;top:1408.50px;color:#ffc66d">prims</div>
<div class="c" style="left:1088.80px;top:1408.50px;color:#a9b7c6">(</div>
<div class="c" style="left:1104.40px;top:1408.50px;color:#cc7832">int</div>
<div class="c" style="left:1166.80px;top:1408.50px;color:#a9b7c6">start) {</div>
<div class="c ln" style="left:548.00px;top:1452.50px;color:#606366">176</div>
<div class="c" style="left:870.40px;top:1452.50px;color:#9876aa">fringe</div>
<div class="c" style="left:979.60px;top:1452.50px;color:#a9b7c6">=</div>
<div class="c" style="left:1010.80px;top:1452.50px;color:#cc7832">new</div>
<div class="c" style="left:1073.20px;top:1452.50px;color:#a9b7c6">PriorityQueue&lt;</div>
<div class="c" style="left:1291.60px;top:1452.50px;color:#787878">pair</div>
<div class="c" style="left:1354.00px;top:1452.50px;color:#a9b7c6">&gt;()</div>
<div class="c" style="left:1400.80px;top:1452.50px;color:#cc7832">;</div>
<div class="c ln" style="left:548.00px;top:1496.50px;color:#606366">177</div>
<div class="c" style="left:870.40px;top:1496.50px;color:#9876aa">edgeTo</div>
<div class="c" style="left:979.60px;top:1496.50px;color:#a9b7c6">=</div>
<div class="c" style="left:1010.80px;top:1496.50px;color:#cc7832">new</div>
<div class="c" style="left:1073.20px;top:1496.50px;color:#a9b7c6">HashMap&lt;&gt;()</div>
<div class="c" style="left:1244.80px;top:1496.50px;color:#cc7832">;</div>
<div class="c ln" style="left:548.00px;top:1540.50px;color:#606366">178</div>
<div class="c" style="left:870.40px;top:1540.50px;color:#9876aa">distTo</div>
<div class="c" style="left:979.60px;top:1540.50px;color:#a9b7c6">=</div>
<div class="c" style="left:1010.80px;top:1540.50px;color:#cc7832">new</div>
<div class="c" style="left:1073.20px;top:1540.50px;color:#a9b7c6">HashMap&lt;&gt;()</div>
<div class="c" style="left:1244.80px;top:1540.50px;color:#cc7832">;</div>
<div class="c ln" style="left:548.00px;top:1584.50px;color:#606366">179</div>
<div class="c" style="left:870.40px;top:1584.50px;color:#9876aa">graph</div>
<div class="c" style="left:964.00px;top:1584.50px;color:#a9b7c6">=</div>
<div class="c" style="left:995.20px;top:1584.50px;color:#cc7832">new</div>
<div class="c" style="left:1057.60px;top:1584.50px;color:#a9b7c6">Graph()</div>
<div class="c" style="left:1166.80px;top:1584.50px;color:#cc7832">;</div>
<div class="c ln" style="left:548.00px;top:1628.50px;color:#606366">180</div>
<div class="c ln" style="left:548.00px;top:1672.50px;color:#606366">181</div>
<div class="c" style="left:870.40px;top:1672.50px;color:#9876aa">fringe</div>
<div class="c" style="left:964.00px;top:1672.50px;color:#a9b7c6">.add(</div>
<div class="c" style="left:1042.00px;top:1672.50px;color:#cc7832">new</div>
<div class="c" style="left:1104.40px;top:1672.50px;color:#a9b7c6">pair(start</div>
<div class="c" style="left:1260.40px;top:1672.50px;color:#cc7832">,</div>
<div class="r" style="left:1296px;top:1673.80px;width:69.5px;height:36.3px;border-radius:6px;background:#3a3a3a"></div>
<div class="t" style="left:1305.00px;top:1681.34px;font:25px/25px 'Liberation Sans',sans-serif;letter-spacing:1.312px;color:#787878;">dist:</div>
<div class="c" style="left:1370.00px;top:1672.50px;color:#6897bb">0</div>
<div class="c" style="left:1385.60px;top:1672.50px;color:#a9b7c6">))</div>
<div class="c" style="left:1416.80px;top:1672.50px;color:#cc7832">;</div>
<svg class="r" style="left:608.00px;top:274.20px;" width="19" height="19" viewBox="0 0 19 19"><circle cx="9.500" cy="9.500" r="9.200" fill="#50963f"/><path d="M6.500,5.500H12.500M6.500,13.500H12.500M9.500,5.500V13.500" stroke="#1e3a1a" stroke-width="1.700" fill="none"/></svg>
<svg class="r" style="left:623.00px;top:268.70px;" width="14" height="29" viewBox="0 0 14 29"><path d="M7,28V8" stroke="#cf5252" stroke-width="2.200"/><path d="M1,9L7,1L13,9Z" fill="#cf5252"/></svg>
<div class="t" style="left:676.00px;top:270.04px;font:25px/25px 'Liberation Sans',sans-serif;letter-spacing:0.000px;color:#b6b8ba;-webkit-text-stroke:0.6px #b6b8ba;">@</div>
<svg class="r" style="left:722.75px;top:275.5px;" width="22" height="26" viewBox="722.75 275.5 22 26"><path d="M725.85,278.10H741.65V291.50L733.75,298.90L725.85,291.50Z" fill="#2b2b2b" stroke="#58595b" stroke-width="2"/><path d="M728.95,285.90H738.55" stroke="#58595b" stroke-width="2"/></svg>
<svg class="r" style="left:722.75px;top:319.5px;" width="22" height="26" viewBox="722.75 319.5 22 26"><path d="M725.85,322.10H741.65V335.50L733.75,342.90L725.85,335.50Z" fill="#2b2b2b" stroke="#58595b" stroke-width="2"/><path d="M728.95,329.90H738.55" stroke="#58595b" stroke-width="2"/></svg>
<svg class="r" style="left:722.75px;top:1419.5px;" width="22" height="26" viewBox="722.75 1419.5 22 26"><path d="M725.85,1422.10H741.65V1435.50L733.75,1442.90L725.85,1435.50Z" fill="#2b2b2b" stroke="#58595b" stroke-width="2"/><path d="M728.95,1429.90H738.55" stroke="#58595b" stroke-width="2"/></svg>
<svg class="r" style="left:722.75px;top:401.5px;" width="22" height="28" viewBox="722.75 401.5 22 28"><path d="M725.85,425.40H741.65V411.50L733.75,403.90L725.85,411.50Z" fill="#2b2b2b" stroke="#58595b" stroke-width="2"/><path d="M728.95,418.20H738.55" stroke="#58595b" stroke-width="2"/></svg>
<svg class="r" style="left:722.75px;top:489.5px;" width="22" height="28" viewBox="722.75 489.5 22 28"><path d="M725.85,513.40H741.65V499.50L733.75,491.90L725.85,499.50Z" fill="#2b2b2b" stroke="#58595b" stroke-width="2"/><path d="M728.95,506.20H738.55" stroke="#58595b" stroke-width="2"/></svg>
<svg class="r" style="left:722.75px;top:577.5px;" width="22" height="28" viewBox="722.75 577.5 22 28"><path d="M725.85,601.40H741.65V587.50L733.75,579.90L725.85,587.50Z" fill="#2b2b2b" stroke="#58595b" stroke-width="2"/><path d="M728.95,594.20H738.55" stroke="#58595b" stroke-width="2"/></svg>
<svg class="r" style="left:722.75px;top:621.5px;" width="22" height="28" viewBox="722.75 621.5 22 28"><path d="M725.85,645.40H741.65V631.50L733.75,623.90L725.85,631.50Z" fill="#2b2b2b" stroke="#58595b" stroke-width="2"/><path d="M728.95,638.20H738.55" stroke="#58595b" stroke-width="2"/></svg>
<svg class="r" style="left:722.75px;top:709.5px;" width="22" height="28" viewBox="722.75 709.5 22 28"><path d="M725.85,733.40H741.65V719.50L733.75,711.90L725.85,719.50Z" fill="#2b2b2b" stroke="#58595b" stroke-width="2"/><path d="M728.95,726.20H738.55" stroke="#58595b" stroke-width="2"/></svg>
<div class="r" style="left:2612.00px;top:176.00px;width:12.00px;height:42.00px;background:#2b2b2b;"></div>
<svg class="r" style="left:2623.00px;top:184.00px;" width="26" height="23" viewBox="0 0 26 23"><path d="M13,0.500L25.500,22.500H0.500Z" fill="#c4941a"/><path d="M13,8V15.500M13,17.500V20.500" stroke="#2b2b2b" stroke-width="3.200"/></svg>
<div class="t" style="left:2653.60px;top:184.34px;font:25px/25px 'Liberation Sans',sans-serif;letter-spacing:0.150px;color:#bbbbbb;">34</div>
<svg class="r" style="left:2697.00px;top:183.00px;" width="26" height="29" viewBox="0 0 26 29"><path d="M3,11L9.500,17L23,3" stroke="#499c54" stroke-width="4.400" fill="none"/><path d="M1.500,26.500L6,22.500L10.500,26.500L15,22.500L19.500,26.500L23.500,22.500" stroke="#499c54" stroke-width="1.800" fill="none"/></svg>
<div class="t" style="left:2728.00px;top:184.34px;font:25px/25px 'Liberation Sans',sans-serif;letter-spacing:0.000px;color:#bbbbbb;">3</div>
<svg class="r" style="left:2762.00px;top:189.00px;" width="20" height="13" viewBox="0 0 20 13"><polyline points="1.500,11 10,2.500 18.500,11" fill="none" stroke="#afb1b3" stroke-width="2.800"/></svg>
<svg class="r" style="left:2804.00px;top:191.00px;" width="20" height="13" viewBox="0 0 20 13"><polyline points="1.500,2 10,10.500 18.500,2" fill="none" stroke="#afb1b3" stroke-width="2.800"/></svg>
<div class="r" style="left:2810.00px;top:276.00px;width:28.00px;height:4.00px;background:#be9117;"></div>
<div class="r" style="left:2810.00px;top:292.00px;width:28.00px;height:4.00px;background:#be9117;"></div>
<div class="r" style="left:2810.00px;top:308.00px;width:28.00px;height:4.00px;background:#be9117;"></div>
<div class="r" style="left:2810.00px;top:332.00px;width:28.00px;height:4.00px;background:#be9117;"></div>
<div class="r" style="left:2810.00px;top:358.00px;width:28.00px;height:4.00px;background:#be9117;"></div>
<div class="r" style="left:2810.00px;top:378.00px;width:28.00px;height:4.00px;background:#be9117;"></div>
<div class="r" style="left:2810.00px;top:398.00px;width:28.00px;height:4.00px;background:#be9117;"></div>
<div class="r" style="left:2810.00px;top:480.00px;width:28.00px;height:4.00px;background:#be9117;"></div>
<div class="r" style="left:2810.00px;top:516.00px;width:28.00px;height:4.00px;background:#be9117;"></div>
<div class="r" style="left:2810.00px;top:542.00px;width:28.00px;height:4.00px;background:#be9117;"></div>
<div class="r" style="left:2810.00px;top:556.00px;width:28.00px;height:4.00px;background:#be9117;"></div>
<div class="r" style="left:2810.00px;top:572.00px;width:28.00px;height:4.00px;background:#be9117;"></div>
<div class="r" style="left:2810.00px;top:644.00px;width:28.00px;height:4.00px;background:#be9117;"></div>
<div class="r" style="left:2810.00px;top:704.00px;width:28.00px;height:4.00px;background:#be9117;"></div>
<div class="r" style="left:2810.00px;top:810.00px;width:28.00px;height:4.00px;background:#be9117;"></div>
<div class="r" style="left:2810.00px;top:826.00px;width:28.00px;height:4.00px;background:#be9117;"></div>
<div class="r" style="left:2810.00px;top:862.00px;width:28.00px;height:4.00px;background:#0a7b1e;"></div>
<div class="r" style="left:2810.00px;top:1000.00px;width:28.00px;height:4.00px;background:#be9117;"></div>
<div class="r" style="left:2810.00px;top:1060.00px;width:28.00px;height:4.00px;background:#be9117;"></div>
<div class="r" style="left:2810.00px;top:1070.00px;width:28.00px;height:4.00px;background:#be9117;"></div>
<div class="r" style="left:2810.00px;top:1080.00px;width:28.00px;height:4.00px;background:#be9117;"></div>
<div class="r" style="left:2810.00px;top:1100.00px;width:28.00px;height:4.00px;background:#be9117;"></div>
<div class="r" style="left:2810.00px;top:1110.00px;width:28.00px;height:4.00px;background:#be9117;"></div>
<div class="r" style="left:2810.00px;top:1132.00px;width:28.00px;height:4.00px;background:#be9117;"></div>
<div class="r" style="left:2810.00px;top:1178.00px;width:28.00px;height:4.00px;background:#be9117;"></div>
<div class="r" style="left:2810.00px;top:1212.00px;width:28.00px;height:4.00px;background:#0a7b1e;"></div>
<div class="r" style="left:2810.00px;top:1232.00px;width:28.00px;height:4.00px;background:#6e4a3a;"></div>
<div class="r" style="left:2810.00px;top:1248.00px;width:28.00px;height:4.00px;background:#be9117;"></div>
<div class="r" style="left:2810.00px;top:1390.00px;width:28.00px;height:4.00px;background:#6e4a3a;"></div>
<div class="r" style="left:2810.00px;top:1406.00px;width:28.00px;height:4.00px;background:#be9117;"></div>
<div class="r" style="left:2810.00px;top:1436.00px;width:28.00px;height:4.00px;background:#be9117;"></div>
<div class="r" style="left:2810.00px;top:1442.00px;width:28.00px;height:4.00px;background:#1a8fd0;"></div>
<div class="r" style="left:2810.00px;top:1472.00px;width:28.00px;height:4.00px;background:#be9117;"></div>
<div class="r" style="left:2810.00px;top:1558.00px;width:28.00px;height:4.00px;background:#be9117;"></div>
<div class="r" style="left:2810.00px;top:430.00px;width:28.00px;height:8.00px;background:#be9117;"></div>
<div class="r" style="left:2810.00px;top:1086.00px;width:28.00px;height:8.00px;background:#be9117;"></div>
<div class="r" style="left:2818px;top:988px;width:14px;height:170px;border-radius:7px;background:rgba(130,130,130,0.45)"></div>
</div></div>
<svg class="r" style="left:62px;top:1722px;" width="26" height="30" viewBox="62 1722 26 30"><circle cx="69.8" cy="1728.6" r="3.6" fill="#afb1b3"/><circle cx="69.8" cy="1745.8" r="3.6" fill="#afb1b3"/><circle cx="80.2" cy="1733.4" r="3.6" fill="#afb1b3"/><path d="M69.8,1728.6V1745.8M80.2,1733.4V1735.5Q80.2,1741 70.5,1741.8" stroke="#afb1b3" stroke-width="3" fill="none"/></svg>
<div class="t" style="left:96.00px;top:1725.98px;font:22px/22px 'Liberation Sans',sans-serif;letter-spacing:0.000px;color:#bbbbbb;">Git</div>
<svg class="r" style="left:167.50px;top:1727.00px;" width="17" height="20" viewBox="0 0 17 20"><path d="M0,0L16.500,9.800L0,19.500Z" fill="#afb1b3"/></svg>
<div class="t" style="left:197.25px;top:1725.98px;font:22px/22px 'Liberation Sans',sans-serif;letter-spacing:0.000px;color:#bbbbbb;">Run</div>
<svg class="r" style="left:276px;top:1722px;" width="26" height="28" viewBox="276 1722 26 28"><path d="M279,1734H299M279,1739.3H299M279.5,1744.6H298.5" stroke="#afb1b3" stroke-width="2.5" fill="none"/><ellipse cx="289" cy="1738.6" rx="8.7" ry="10.6" fill="#3c3f41"/><ellipse cx="289" cy="1738.6" rx="7.4" ry="9.3" fill="#afb1b3"/><path d="M283.8,1726L287.4,1730.5M294.2,1726L290.6,1730.5" stroke="#afb1b3" stroke-width="2.4" fill="none"/></svg>
<div class="t" style="left:309.25px;top:1725.98px;font:22px/22px 'Liberation Sans',sans-serif;letter-spacing:0.875px;color:#bbbbbb;">Debug</div>
<svg class="r" style="left:418px;top:1724px;" width="24" height="26" viewBox="418 1724 24 26"><path d="M420,1730.2H424M426.2,1730.2H440M420,1736.5H424M426.2,1736.5H440M420,1742.8H424M426.2,1742.8H440" stroke="#afb1b3" stroke-width="3.4" fill="none"/></svg>
<div class="t" style="left:450.50px;top:1725.98px;font:22px/22px 'Liberation Sans',sans-serif;letter-spacing:-0.500px;color:#bbbbbb;">TODO</div>
<svg class="r" style="left:554.50px;top:1725.50px;" width="21" height="21" viewBox="0 0 21 21"><circle cx="10.500" cy="10.500" r="10.500" fill="#afb1b3"/><path d="M10.500,4.500V12M10.500,14.200V17" stroke="#3c3f41" stroke-width="3.200"/></svg>
<div class="t" style="left:585.25px;top:1725.98px;font:22px/22px 'Liberation Sans',sans-serif;letter-spacing:0.429px;color:#bbbbbb;">Problems</div>
<svg class="r" style="left:726.00px;top:1726.00px;" width="22" height="20" viewBox="0 0 22 20"><rect width="22" height="19.500" fill="#afb1b3"/><path d="M3.500,4L9,9L3.500,14" stroke="#3c3f41" stroke-width="2.200" fill="none"/><path d="M10.500,14.500H18" stroke="#3c3f41" stroke-width="2.200"/></svg>
<div class="t" style="left:759.00px;top:1725.98px;font:22px/22px 'Liberation Sans',sans-serif;letter-spacing:0.250px;color:#bbbbbb;">Terminal</div>
<svg class="r" style="left:892.00px;top:1724.00px;" width="24" height="24" viewBox="0 0 24 24"><rect width="24" height="24" rx="2.500" fill="#6b6d6f"/><path d="M9,5.500H5.500V18.500H9M15,5.500H18.500V18.500H15" stroke="#3c3f41" stroke-width="2.600" fill="none"/></svg>
<div class="t" style="left:927.00px;top:1725.98px;font:22px/22px 'Liberation Sans',sans-serif;letter-spacing:0.458px;color:#bbbbbb;">Style Checker</div>
<svg class="r" style="left:1119.00px;top:1724.00px;" width="24" height="25" viewBox="0 0 24 25"><path d="M12,1L23,7L12,13L1,7Z" fill="#afb1b3"/><path d="M2.500,12L12,17.200L21.500,12M2.500,17L12,22.200L21.500,17" stroke="#afb1b3" stroke-width="2.400" fill="none"/></svg>
<div class="t" style="left:1150.25px;top:1725.98px;font:22px/22px 'Liberation Sans',sans-serif;letter-spacing:0.304px;color:#bbbbbb;">Python Packages</div>
<svg class="r" style="left:1372.00px;top:1723.00px;" width="26" height="26" viewBox="0 0 26 26"><path d="M7,1.500H19L25.500,13L19,24.500H7L0.500,13Z" fill="#afb1b3"/><path d="M9.500,7L19,13L9.500,19Z" fill="#3c3f41"/></svg>
<div class="t" style="left:1405.00px;top:1725.98px;font:22px/22px 'Liberation Sans',sans-serif;letter-spacing:0.500px;color:#bbbbbb;">Services</div>
<svg class="r" style="left:1531.00px;top:1723.00px;" width="27" height="26" viewBox="0 0 27 26"><path d="M2,8.500L12.500,2.500" stroke="#afb1b3" stroke-width="5.200" fill="none"/><path d="M9.500,7.500L24.500,23" stroke="#afb1b3" stroke-width="4.400" fill="none"/></svg>
<div class="t" style="left:1564.25px;top:1725.98px;font:22px/22px 'Liberation Sans',sans-serif;letter-spacing:1.062px;color:#bbbbbb;">Build</div>
<svg class="r" style="left:12.00px;top:1768.00px;" width="24" height="24" viewBox="0 0 24 24"><path d="M5.500,1H23V18.500H5.500Z" fill="none" stroke="#afb1b3" stroke-width="2"/><path d="M1,5.500V23H18.500" fill="none" stroke="#afb1b3" stroke-width="2"/></svg>
<div class="t" style="left:62.50px;top:1768.83px;font:23px/23px 'Liberation Sans',sans-serif;letter-spacing:-0.276px;color:#bbbbbb;">Tests passed: 1 (a minute ago)</div>
<div class="t" style="left:2288.25px;top:1768.83px;font:23px/23px 'Liberation Sans',sans-serif;letter-spacing:0.400px;color:#bbbbbb;">192:39</div>
<div class="t" style="left:2382.75px;top:1768.83px;font:23px/23px 'Liberation Sans',sans-serif;letter-spacing:-0.750px;color:#bbbbbb;">LF</div>
<div class="t" style="left:2430.75px;top:1768.83px;font:23px/23px 'Liberation Sans',sans-serif;letter-spacing:0.562px;color:#bbbbbb;">UTF-8</div>
<div class="t" style="left:2522.00px;top:1768.83px;font:23px/23px 'Liberation Sans',sans-serif;letter-spacing:-0.036px;color:#bbbbbb;">4 spaces</div>
<svg class="r" style="left:2638.00px;top:1766.00px;" width="28" height="24" viewBox="0 0 28 24"><path d="M14,0.500L27.500,23.500H0.500Z" fill="#e0a83a"/><path d="M14,8V16M14,18.200V21.200" stroke="#3c3f41" stroke-width="3.400"/></svg>
<div class="t" style="left:2671.25px;top:1768.83px;font:23px/23px 'Liberation Sans',sans-serif;letter-spacing:0.000px;color:#bbbbbb;">Merging main</div>
<svg class="r" style="left:2830.00px;top:1764.00px;" width="24" height="26" viewBox="0 0 24 26"><path d="M3,2H9V8" stroke="#afb1b3" stroke-width="2" fill="none"/><rect x="7" y="10" width="15" height="14" fill="#afb1b3"/></svg>
</div>
<div class="r" style="left:2552px;top:1580px;width:304px;height:196px;background:#fff;border-radius:10px;box-shadow:0 0 6px rgba(0,0,0,0.35)"><div class="r" style="left:8px;top:8px;width:288px;height:180px;overflow:hidden;background:#2b2b2b"><div class="pg" style="transform:scale(0.1);transform-origin:0 0"><div class="r" style="left:0.00px;top:0.00px;width:2880.00px;height:1800.00px;background:#3c3f41;"></div>
<div class="r" style="left:0.00px;top:0.00px;width:2880.00px;height:2.00px;background:#0d0d0d;"></div>
<div class="r" style="left:0.00px;top:56.00px;width:2880.00px;height:2.00px;background:#2d2f31;"></div>
<div class="r" style="left:0.00px;top:58.00px;width:40.00px;height:144.00px;background:#2b2d2f;"></div>
<div class="r" style="left:40.00px;top:58.00px;width:2.00px;height:1654.00px;background:#323537;"></div>
<div class="r" style="left:42.00px;top:110.00px;width:496.00px;height:2.00px;background:#2d2f31;"></div>
<div class="r" style="left:538.00px;top:58.00px;width:2.00px;height:1654.00px;background:#2d2f31;"></div>
<div class="r" style="left:540.00px;top:110.00px;width:2298.00px;height:2.00px;background:#2d2f31;"></div>
<div class="r" style="left:740.00px;top:58.00px;width:212.00px;height:48.00px;background:#4e5254;"></div>
<div class="r" style="left:740.00px;top:106.00px;width:212.00px;height:5.50px;background:#4a88c7;"></div>
<div class="r" style="left:540.00px;top:112.00px;width:756.00px;height:56.00px;background:#45494a;"></div>
<div class="r" style="left:1296.00px;top:112.00px;width:2.00px;height:56.00px;background:#323537;"></div>
<div class="r" style="left:540.00px;top:167.00px;width:2298.00px;height:1.50px;background:#35383a;"></div>
<div class="r" style="left:540.00px;top:168.50px;width:2298.00px;height:1543.50px;background:#2b2b2b;"></div>
<div class="r" style="left:540.00px;top:168.50px;width:193.00px;height:1543.50px;background:#313335;"></div>
<div class="r" style="left:733.00px;top:168.50px;width:2.00px;height:1543.50px;background:#555658;"></div>
<div class="r" style="left:2838.00px;top:58.00px;width:2.00px;height:1654.00px;background:#2d2f31;"></div>
<div class="r" style="left:0.00px;top:1712.00px;width:2880.00px;height:2.00px;background:#2d2f31;"></div>
<div class="r" style="left:0.00px;top:1757.50px;width:2880.00px;height:1.50px;background:#494b4d;"></div>
<div class="t" style="left:22.50px;top:15.68px;font:24px/24px 'Liberation Sans',sans-serif;font-weight:bold;letter-spacing:1.812px;color:#bbbbbb;">lab24</div>
<svg class="r" style="left:98.00px;top:10.00px;" width="20" height="40" viewBox="0 0 20 40"><polyline points="4,4 14,19 4,34" fill="none" stroke="#6e7072" stroke-width="1.6"/></svg>
<svg class="r" style="left:122.00px;top:13.50px;" width="28" height="28" viewBox="0 0 28 28"><circle cx="14" cy="14" r="14" fill="#3f87a3"/><path d="M17.600,11.400A4.900,5.100 0 1 0 17.600,18.400" fill="none" stroke="#263a44" stroke-width="2.200"/></svg>
<div class="t" style="left:157.75px;top:15.68px;font:24px/24px 'Liberation Sans',sans-serif;letter-spacing:0.812px;color:#62a65a;">Graph</div>
<svg class="r" style="left:232.00px;top:10.00px;" width="20" height="40" viewBox="0 0 20 40"><polyline points="4,4 14,19 4,34" fill="none" stroke="#6e7072" stroke-width="1.6"/></svg>
<svg class="r" style="left:256.00px;top:13.50px;" width="28" height="28" viewBox="0 0 28 28"><circle cx="14" cy="14" r="14" fill="#b7707e"/><path d="M6.700,20.400V10.200M6.700,13.800C7.200,9.600 13.200,9.600 13.700,13.800V20.400M13.700,13.800C14.200,9.600 20.200,9.600 20.700,13.800V20.400" fill="none" stroke="#3a2a30" stroke-width="2.100"/></svg>
<div class="t" style="left:291.50px;top:15.68px;font:24px/24px 'Liberation Sans',sans-serif;letter-spacing:1.125px;color:#62a65a;">prims</div>
<svg class="r" style="left:1745px;top:10px;" width="60" height="36" viewBox="1745 10 60 36"><ellipse cx="1769.3" cy="20.3" rx="3.9" ry="5" fill="#afb1b3"/><polygon points="1771.1,25.8 1773.1,26.5 1777.0,29.5 1778.0,32.8 1774.4,32.8 1771.7,30.4 1768.4,29.5" fill="#afb1b3" /><ellipse cx="1762.1" cy="22" rx="6" ry="6.6" fill="#3c3f41"/><polygon points="1755.2,30.4 1759.8,28.1 1765.5,28.1 1767.1,30.4 1773.1,33.1 1775.7,39.7 1748.6,39.7 1751.2,33.8" fill="#3c3f41" /><ellipse cx="1762.1" cy="22" rx="5" ry="5.8" fill="#afb1b3"/><path d="M1749.9,38.9 C1750.2,33.8 1757.2,33.1 1759.3,30.1 L1759.3,27.5 L1765.0,27.5 L1765.0,30.1 C1767.1,33.1 1774.0,33.8 1774.4,38.9 Z" fill="#afb1b3"/><polygon points="1784.2,26.0 1799.8,26.0 1792.0,34.1" fill="#afb1b3" /></svg>
<div class="r" style="left:1816.00px;top:8.00px;width:2.00px;height:39.50px;background:#515456;"></div>
<svg class="r" style="left:1830px;top:10px;" width="40" height="36" viewBox="1830 10 40 36"><polygon points="1834.2,25.2 1845.1,14.6 1852.1,13.9 1851.7,16.2 1848.4,17.6 1837.9,29.1" fill="#499c54" /><polygon points="1842.8,24.2 1846.1,20.5 1852.4,26.1 1854.0,26.8 1864.3,36.4 1859.3,42.0 1849.1,32.4 1848.8,30.1" fill="#499c54" /></svg>
<div class="r" style="left:1889px;top:7px;width:266.5px;height:42px;box-sizing:border-box;border:2px solid #616466;border-radius:7px"></div>
<svg class="r" style="left:1908.00px;top:17.00px;" width="28" height="23" viewBox="0 0 28 23"><path d="M2,11.500L12,2V21Z" fill="#84493a"/><path d="M16,2L26,11.500L16,21Z" fill="#446f40"/></svg>
<div class="t" style="left:1945.75px;top:16.68px;font:24px/24px 'Liberation Sans',sans-serif;letter-spacing:-0.714px;color:#bbbbbb;">GraphTest.test3</div>
<svg class="r" style="left:2117.00px;top:22.00px;" width="22" height="14" viewBox="0 0 22 14"><path d="M2.500,2.500h17.500l-8.750,9.500z" fill="#afb1b3"/></svg>
<svg class="r" style="left:2182.00px;top:14.00px;" width="24" height="28" viewBox="0 0 24 28"><path d="M2,2L22,14L2,26Z" fill="#499c54"/></svg>
<svg class="r" style="left:2229.00px;top:13.00px;" width="30" height="30" viewBox="0 0 30 30"><path d="M7,12.500Q7,6.700 15,6.700Q23,6.700 23,12.500V21Q23,29 15,29Q7,29 7,21Z" fill="#499c54"/><path d="M8.400,1.200L13.900,6.600M21.600,1.200L16.100,6.600" stroke="#499c54" stroke-width="3" fill="none"/><path d="M3,11.300H27M3,17.600H27M3,23.900H27" stroke="#499c54" stroke-width="2.900" fill="none"/><rect x="11.200" y="13.300" width="7.600" height="2.500" fill="#3c3f41"/><rect x="11.200" y="19.500" width="7.600" height="2.400" fill="#3c3f41"/></svg>
<svg class="r" style="left:2278px;top:12px;" width="38" height="36" viewBox="2278 12 38 36"><path d="M2291.9,16.0 L2281.7,18.5 L2281.7,28.8 C2282.8,33.8 2286.5,37.9 2291.9,40.2 Z" fill="#afb1b3"/><polygon points="2293.3,16.2 2302.1,18.5 2302.1,24.2 2297.7,24.2 2297.7,20.9 2293.3,20.1" fill="#afb1b3" /><polygon points="2293.3,33.8 2296.0,32.5 2296.0,37.1 2293.3,39.5" fill="#afb1b3" /><polygon points="2297.9,25.9 2311.5,35.0 2297.9,44.1" fill="#499c54" /></svg>
<div class="r" style="left:2338.00px;top:18.00px;width:20.00px;height:20.00px;background:#5a5a5a;"></div>
<div class="r" style="left:2380.00px;top:8.00px;width:2.00px;height:39.50px;background:#515456;"></div>
<div class="t" style="left:2399.75px;top:16.68px;font:24px/24px 'Liberation Sans',sans-serif;letter-spacing:-0.167px;color:#bbbbbb;">Git:</div>
<svg class="r" style="left:2458.00px;top:13.00px;" width="30" height="30" viewBox="0 0 30 30"><path d="M25.500,4L6,23.500" stroke="#3592c4" stroke-width="4.400" fill="none"/><path d="M3.500,26V10.500L7.500,14.500L14.500,21.500L19,26Z" fill="#3592c4"/></svg>
<svg class="r" style="left:2509.00px;top:13.00px;" width="34" height="30" viewBox="0 0 34 30"><polyline points="4,17.500 12.500,25 29,5" stroke="#499c54" stroke-width="4.600" fill="none"/></svg>
<svg class="r" style="left:2561.00px;top:13.00px;" width="30" height="30" viewBox="0 0 30 30"><path d="M4.500,26L24,6.500" stroke="#499c54" stroke-width="4.400" fill="none"/><path d="M26.500,4V19.500L22.500,15.500L15.500,8.500L11,4Z" fill="#499c54"/></svg>
<svg class="r" style="left:2612.00px;top:11.50px;" width="32" height="32" viewBox="0 0 32 32"><circle cx="16" cy="16" r="12.500" fill="none" stroke="#5a5d5f" stroke-width="3.500"/><path d="M16,9V17L21.500,20.500" stroke="#5a5d5f" stroke-width="2.800" fill="none"/></svg>
<svg class="r" style="left:2664.00px;top:12.00px;" width="34" height="32" viewBox="0 0 34 32"><path d="M15,2.500L3.500,12L15,21.500Z" fill="#afb1b3"/><path d="M12,12H20.500a8,8 0 0 1 0,16H11" stroke="#afb1b3" stroke-width="3.600" fill="none"/></svg>
<div class="r" style="left:2712.00px;top:8.00px;width:2.00px;height:39.50px;background:#515456;"></div>
<svg class="r" style="left:2729.00px;top:12.00px;" width="34" height="32" viewBox="0 0 34 32"><circle cx="13.500" cy="13" r="9" fill="none" stroke="#afb1b3" stroke-width="3.800"/><path d="M20,19.500L30,29" stroke="#afb1b3" stroke-width="4.600" fill="none"/></svg>
<svg class="r" style="left:2780px;top:10px;" width="36" height="36" viewBox="2780 10 36 36"><circle cx="2797.95" cy="27.9" r="16.1" fill="#f0a630"/><polygon points="2790.0,27.7 2798.0,19.9 2805.9,27.7" fill="#fff" /><polygon points="2796.1,27.4 2800.0,27.4 2800.0,35.9 2796.1,35.9" fill="#fff" /></svg>
<svg class="r" style="left:2832px;top:10px;" width="36" height="36" viewBox="2832 10 36 36"><defs><linearGradient id="lgA" x1="0" y1="0" x2="0" y2="1"><stop offset="0" stop-color="#f4f24a"/><stop offset="0.5" stop-color="#8fe08e"/><stop offset="1" stop-color="#22c4ea"/></linearGradient><linearGradient id="lgB" x1="0" y1="0" x2="1" y2="0.4"><stop offset="0" stop-color="#3fe070"/><stop offset="0.5" stop-color="#22b0b0"/><stop offset="1" stop-color="#168cf2"/></linearGradient><linearGradient id="lgC" x1="1" y1="0" x2="0" y2="1"><stop offset="0" stop-color="#1c50b8"/><stop offset="0.6" stop-color="#1a6cd0"/><stop offset="1" stop-color="#16a0f0"/></linearGradient></defs><path d="M2838.2,13.8 Q2854.5,13.1 2864.1,25.8 L2853.2,25.8 Q2848.2,17.6 2838.2,13.8 Z" fill="url(#lgB)"/><path d="M2853.2,25.8 L2864.1,25.8 Q2856.4,38.5 2841.4,42.0 Q2850.0,35.4 2853.2,25.8 Z" fill="url(#lgC)"/><path d="M2838.2,13.8 Q2848.2,17.6 2853.2,25.8 Q2850.0,35.4 2841.4,42.0 Q2830.9,27.6 2838.2,13.8 Z" fill="url(#lgA)"/></svg>
<svg class="r" style="left:558.00px;top:70.00px;" width="28" height="28" viewBox="0 0 28 28"><circle cx="14" cy="14" r="14" fill="#3f87a3"/><path d="M17.600,11.400A4.900,5.100 0 1 0 17.600,18.400" fill="none" stroke="#263a44" stroke-width="2.200"/></svg>
<div class="t" style="left:595.25px;top:73.88px;font:22px/22px 'Liberation Sans',sans-serif;letter-spacing:0.000px;color:#62a65a;">Edge.java</div>
<svg class="r" style="left:710.50px;top:76.50px;" width="15.5" height="15.5" viewBox="0 0 15.5 15.5"><path d="M0.700,0.700L14.8,14.8M14.8,0.700L0.700,14.8" stroke="#7d8082" stroke-width="1.8" fill="none"/></svg>
<svg class="r" style="left:758.00px;top:70.00px;" width="28" height="28" viewBox="0 0 28 28"><circle cx="14" cy="14" r="14" fill="#3f87a3"/><path d="M17.600,11.400A4.900,5.100 0 1 0 17.600,18.400" fill="none" stroke="#263a44" stroke-width="2.200"/></svg>
<div class="t" style="left:796.00px;top:73.88px;font:22px/22px 'Liberation Sans',sans-serif;letter-spacing:0.028px;color:#62a65a;">Graph.java</div>
<svg class="r" style="left:920.50px;top:76.50px;" width="15.5" height="15.5" viewBox="0 0 15.5 15.5"><path d="M0.700,0.700L14.8,14.8M14.8,0.700L0.700,14.8" stroke="#8a8d8f" stroke-width="1.8" fill="none"/></svg>
<svg class="r" style="left:968.00px;top:70.00px;" width="28" height="28" viewBox="0 0 28 28"><circle cx="14" cy="14" r="14" fill="#3f87a3"/><path d="M17.600,11.400A4.900,5.100 0 1 0 17.600,18.400" fill="none" stroke="#263a44" stroke-width="2.200"/></svg>
<svg class="r" style="left:984.00px;top:66.50px;" width="15" height="11" viewBox="0 0 15 11"><path d="M0.500,5.500L6.500,0.500V10.500Z" fill="#e05a2b"/><path d="M8.500,0.500L14.500,5.500L8.500,10.500Z" fill="#56a83c"/></svg>
<div class="t" style="left:1006.00px;top:73.88px;font:22px/22px 'Liberation Sans',sans-serif;letter-spacing:-0.077px;color:#62a65a;">GraphTest.java</div>
<svg class="r" style="left:1168.00px;top:76.50px;" width="15.5" height="15.5" viewBox="0 0 15.5 15.5"><path d="M0.700,0.700L14.8,14.8M14.8,0.700L0.700,14.8" stroke="#7d8082" stroke-width="1.8" fill="none"/></svg>
<svg class="r" style="left:1220.00px;top:70.50px;" width="20" height="27.5" viewBox="0 0 20 27.5"><path d="M9.500,0H20V27.500H0V9.500H9.500Z" fill="#8a979f"/><path d="M0,7.500L7.500,0V7.500Z" fill="#8a979f"/><path d="M3.800,14H16.200M3.800,17.600H16.200M3.800,21.200H12.500" stroke="#3c3f41" stroke-width="2" fill="none"/></svg>
<div class="t" style="left:1253.75px;top:73.88px;font:22px/22px 'Liberation Sans',sans-serif;letter-spacing:0.315px;color:#62a65a;">graphTestSomeDisjoint.in</div>
<svg class="r" style="left:1524.50px;top:76.50px;" width="15.5" height="15.5" viewBox="0 0 15.5 15.5"><path d="M0.700,0.700L14.8,14.8M14.8,0.700L0.700,14.8" stroke="#7d8082" stroke-width="1.8" fill="none"/></svg>
<svg class="r" style="left:1576.00px;top:70.50px;" width="20" height="27.5" viewBox="0 0 20 27.5"><path d="M9.500,0H20V27.500H0V9.500H9.500Z" fill="#8a979f"/><path d="M0,7.500L7.500,0V7.500Z" fill="#8a979f"/><path d="M3.800,14H16.200M3.800,17.600H16.200M3.800,21.200H12.500" stroke="#3c3f41" stroke-width="2" fill="none"/></svg>
<div class="t" style="left:1609.75px;top:73.88px;font:22px/22px 'Liberation Sans',sans-serif;letter-spacing:0.324px;color:#62a65a;">graphTestNormal.in</div>
<svg class="r" style="left:1820.50px;top:76.50px;" width="15.5" height="15.5" viewBox="0 0 15.5 15.5"><path d="M0.700,0.700L14.8,14.8M14.8,0.700L0.700,14.8" stroke="#7d8082" stroke-width="1.8" fill="none"/></svg>
<svg class="r" style="left:1872.00px;top:70.50px;" width="20" height="27.5" viewBox="0 0 20 27.5"><path d="M9.500,0H20V27.500H0V9.500H9.500Z" fill="#8a979f"/><path d="M0,7.500L7.500,0V7.500Z" fill="#8a979f"/><path d="M3.800,14H16.200M3.800,17.600H16.200M3.800,21.200H12.500" stroke="#3c3f41" stroke-width="2" fill="none"/></svg>
<div class="t" style="left:1906.25px;top:73.88px;font:22px/22px 'Liberation Sans',sans-serif;letter-spacing:0.307px;color:#62a65a;">graphTestAllDisjoint.in</div>
<svg class="r" style="left:2144.00px;top:76.50px;" width="15.5" height="15.5" viewBox="0 0 15.5 15.5"><path d="M0.700,0.700L14.8,14.8M14.8,0.700L0.700,14.8" stroke="#7d8082" stroke-width="1.8" fill="none"/></svg>
<div class="r" style="left:2811px;top:72px;width:6px;height:6px;border-radius:3px;background:#afb1b3"></div>
<div class="r" style="left:2811px;top:81px;width:6px;height:6px;border-radius:3px;background:#afb1b3"></div>
<div class="r" style="left:2811px;top:90px;width:6px;height:6px;border-radius:3px;background:#afb1b3"></div>
<svg class="r" style="left:552.00px;top:126.00px;" width="38" height="28" viewBox="0 0 38 28"><circle cx="11.500" cy="11.500" r="8.300" fill="none" stroke="#85888a" stroke-width="2.200"/><path d="M17.500,17.500L24.500,25" stroke="#85888a" stroke-width="3" fill="none"/><path d="M25.500,12H34L29.750,17.200Z" fill="#85888a"/></svg>
<svg class="r" style="left:1086.00px;top:128.00px;" width="24" height="25" viewBox="0 0 24 25"><path d="M2.500,3H13a7,7 0 0 1 0,14H5" stroke="#646769" stroke-width="2.400" fill="none"/><path d="M10.500,10.500L3.500,17L10.500,23.500Z" fill="#646769"/></svg>
<div class="r" style="left:1130.00px;top:120.50px;width:2.00px;height:38.50px;background:#515456;"></div>
<div class="t" style="left:1149.00px;top:130.18px;font:24px/24px 'Liberation Sans',sans-serif;font-weight:bold;letter-spacing:0.000px;color:#6f7577;">Cc</div>
<div class="t" style="left:1203.00px;top:130.18px;font:24px/24px 'Liberation Sans',sans-serif;font-weight:bold;letter-spacing:0.000px;color:#54585a;">W</div>
<div class="r" style="left:1246px;top:118px;width:44px;height:44px;border-radius:5px;background:#5c6164"></div>
<div class="r" style="left:1258.00px;top:146.50px;width:4.00px;height:4.00px;background:#3bb5e8;"></div>
<svg class="r" style="left:1264.00px;top:130.50px;" width="15" height="16" viewBox="0 0 15 16"><path d="M7.500,0.500V15.500M1,4.200L14,11.800M14,4.200L1,11.800" stroke="#3bb5e8" stroke-width="3" fill="none"/></svg>
<div class="t" style="left:1349.75px;top:129.83px;font:23px/23px 'Liberation Sans',sans-serif;letter-spacing:0.000px;color:#bbbbbb;">0 results</div>
<svg class="r" style="left:1488.00px;top:127.00px;" width="24" height="26" viewBox="0 0 24 26"><path d="M12,25V4" stroke="#595c5e" stroke-width="3.600" fill="none"/><path d="M3,12.500L12,3.500L21,12.500" stroke="#595c5e" stroke-width="3.600" fill="none"/></svg>
<svg class="r" style="left:1540.00px;top:127.00px;" width="24" height="26" viewBox="0 0 24 26"><path d="M12,1V22" stroke="#595c5e" stroke-width="3.600" fill="none"/><path d="M3,13.500L12,22.500L21,13.500" stroke="#595c5e" stroke-width="3.600" fill="none"/></svg>
<svg class="r" style="left:1592.00px;top:128.50px;" width="24" height="23" viewBox="0 0 24 23"><rect x="1.100" y="1.100" width="21.800" height="20.800" fill="none" stroke="#595c5e" stroke-width="2.600"/><rect x="1" y="15" width="14" height="7.500" fill="#595c5e"/></svg>
<div class="r" style="left:1636.00px;top:120.50px;width:2.00px;height:38.50px;background:#515456;"></div>
<svg class="r" style="left:1656.00px;top:126.00px;" width="20" height="20" viewBox="0 0 20 20"><path d="M10,0V20M0,10.300H20" stroke="#595c5e" stroke-width="4" fill="none"/></svg>
<svg class="r" style="left:1672.30px;top:139.50px;" width="14" height="17" viewBox="0 0 14 17"><path d="M3.500,1V16M10.500,1V16" stroke="#595c5e" stroke-width="1.500" fill="none"/><path d="M0.500,1H6.500M7.500,1H13.500M0.500,16H6.500M7.500,16H13.500" stroke="#595c5e" stroke-width="1.600" fill="none" stroke-dasharray="1.400,0.900"/></svg>
<div class="r" style="left:1707.50px;top:134.30px;width:20.00px;height:4.00px;background:#595c5e;"></div>
<svg class="r" style="left:1724.00px;top:139.50px;" width="14" height="17" viewBox="0 0 14 17"><path d="M3.500,1V16M10.500,1V16" stroke="#595c5e" stroke-width="1.500" fill="none"/><path d="M0.500,1H6.500M7.500,1H13.500M0.500,16H6.500M7.500,16H13.500" stroke="#595c5e" stroke-width="1.600" fill="none" stroke-dasharray="1.400,0.900"/></svg>
<svg class="r" style="left:1757.00px;top:126.00px;" width="22" height="20" viewBox="0 0 22 20"><path d="M15.500,4H2.100V17.800H16V11" stroke="#595c5e" stroke-width="2.200" fill="none"/><path d="M5.500,9.500L9.200,13.500L19.500,2" stroke="#595c5e" stroke-width="2.600" fill="none"/></svg>
<svg class="r" style="left:1776.00px;top:139.50px;" width="14" height="17" viewBox="0 0 14 17"><path d="M3.500,1V16M10.500,1V16" stroke="#595c5e" stroke-width="1.500" fill="none"/><path d="M0.500,1H6.500M7.500,1H13.500M0.500,16H6.500M7.500,16H13.500" stroke="#595c5e" stroke-width="1.600" fill="none" stroke-dasharray="1.400,0.900"/></svg>
<div class="r" style="left:1806.00px;top:120.50px;width:2.00px;height:38.50px;background:#515456;"></div>
<svg class="r" style="left:1828.00px;top:129.00px;" width="27" height="26" viewBox="0 0 27 26"><path d="M0,2.500H22M0,10.500H12M0,18.500H12" stroke="#afb1b3" stroke-width="3.600" fill="none"/><path d="M21,9V24M16,9.500H26M16,23.800H26" stroke="#afb1b3" stroke-width="2.400" fill="none"/></svg>
<svg class="r" style="left:1880.00px;top:128.00px;" width="24" height="24" viewBox="0 0 24 24"><path d="M0,0H24L14.800,11.500V24H9.200V11.500Z" fill="#afb1b3"/></svg>
<svg class="r" style="left:2810.50px;top:133.00px;" width="15" height="15" viewBox="0 0 15 15"><path d="M0.700,0.700L14.3,14.3M14.3,0.700L0.700,14.3" stroke="#6c7073" stroke-width="1.8" fill="none"/></svg>
<div class="t" style="left:9.03px;top:145.75px;transform-origin:0 0;transform:rotate(-90deg);font:23px/23px 'Liberation Sans',sans-serif;letter-spacing:-0.042px;color:#ffffff;">Project</div>
<svg class="r" style="left:10.00px;top:158.00px;" width="22" height="18" viewBox="0 0 22 18"><path d="M0,0H8.500L11.500,4.500H22V18H0Z" fill="#b4b6b8"/></svg>
<div class="t" style="left:9.03px;top:300.00px;transform-origin:0 0;transform:rotate(-90deg);font:23px/23px 'Liberation Sans',sans-serif;letter-spacing:0.000px;color:#bbbbbb;">Commit</div>
<svg class="r" style="left:8.00px;top:307.00px;" width="26" height="26" viewBox="0 0 26 26"><circle cx="13" cy="13" r="6.800" fill="none" stroke="#afb1b3" stroke-width="3.400"/><path d="M0,13H6M20,13H26" stroke="#afb1b3" stroke-width="3.400"/></svg>
<div class="t" style="left:9.03px;top:514.25px;transform-origin:0 0;transform:rotate(-90deg);font:23px/23px 'Liberation Sans',sans-serif;letter-spacing:-0.333px;color:#bbbbbb;">Pull Requests</div>
<svg class="r" style="left:8px;top:520px;" width="28" height="30" viewBox="8 520 28 30"><rect x="11.6" y="524.5" width="4" height="21" fill="#afb1b3"/><path d="M17.8,534L24.6,527V541Z" fill="#afb1b3"/><path d="M24,534H30V545" stroke="#afb1b3" stroke-width="4" fill="none"/></svg>
<div class="t" style="left:9.03px;top:1465.50px;transform-origin:0 0;transform:rotate(-90deg);font:23px/23px 'Liberation Sans',sans-serif;letter-spacing:0.069px;color:#bbbbbb;">Structure</div>
<svg class="r" style="left:12.00px;top:1478.00px;" width="18" height="18" viewBox="0 0 18 18"><rect x="7" y="0" width="7.500" height="7.500" fill="#afb1b3"/><rect x="0" y="10.500" width="7.500" height="7.500" fill="#afb1b3"/><rect x="10.500" y="10.500" width="7.500" height="7.500" fill="#afb1b3"/></svg>
<div class="t" style="left:9.03px;top:1653.25px;transform-origin:0 0;transform:rotate(-90deg);font:23px/23px 'Liberation Sans',sans-serif;letter-spacing:-0.213px;color:#bbbbbb;">Bookmarks</div>
<svg class="r" style="left:12.00px;top:1664.00px;" width="18" height="22" viewBox="0 0 18 22"><path d="M0,0H18V22L9,14.500L0,22Z" fill="#afb1b3"/></svg>
<svg class="r" style="left:68.00px;top:72.00px;" width="28" height="26" viewBox="0 0 28 26"><rect x="0" y="0" width="28" height="26" fill="#87939a"/><rect x="2.200" y="6" width="23.600" height="17.800" fill="#3c3f41"/><rect x="4.200" y="8" width="19.600" height="13.800" fill="#3f87a3"/></svg>
<div class="t" style="left:104.75px;top:71.14px;font:27px/27px 'Liberation Sans',sans-serif;letter-spacing:0.750px;color:#bbbbbb;">Project</div>
<svg class="r" style="left:224.00px;top:81.00px;" width="20" height="13" viewBox="0 0 20 13"><path d="M1,1H19L10,11.500Z" fill="#afb1b3"/></svg>
<svg class="r" style="left:276.00px;top:70.00px;" width="28" height="28" viewBox="0 0 28 28"><circle cx="14" cy="14" r="12.300" fill="none" stroke="#afb1b3" stroke-width="3"/><path d="M14,1V9.500M14,18.500V27M1,14H9.500M18.500,14H27" stroke="#afb1b3" stroke-width="3" fill="none"/></svg>
<svg class="r" style="left:330.00px;top:70.00px;" width="24" height="28" viewBox="0 0 24 28"><path d="M0,1.500H24M0,26.500H24" stroke="#afb1b3" stroke-width="3"/><path d="M5.500,12L12,5.500L18.500,12ZM5.500,16L12,22.500L18.500,16Z" fill="#afb1b3"/></svg>
<svg class="r" style="left:382.00px;top:70.00px;" width="24" height="28" viewBox="0 0 24 28"><path d="M0,14H24" stroke="#afb1b3" stroke-width="3"/><path d="M5.500,2L12,9L18.500,2ZM5.500,26L12,19L18.500,26Z" fill="#afb1b3"/></svg>
<div class="r" style="left:426.00px;top:64.50px;width:2.00px;height:38.50px;background:#515456;"></div>
<svg class="r" style="left:447.00px;top:71.00px;" width="26" height="26" viewBox="0 0 26 26"><g transform="translate(13,13)"><rect x="-3.200" y="-13" width="6.400" height="7" fill="#afb1b3" transform="rotate(0)"/><rect x="-3.200" y="-13" width="6.400" height="7" fill="#afb1b3" transform="rotate(45)"/><rect x="-3.200" y="-13" width="6.400" height="7" fill="#afb1b3" transform="rotate(90)"/><rect x="-3.200" y="-13" width="6.400" height="7" fill="#afb1b3" transform="rotate(135)"/><rect x="-3.200" y="-13" width="6.400" height="7" fill="#afb1b3" transform="rotate(180)"/><rect x="-3.200" y="-13" width="6.400" height="7" fill="#afb1b3" transform="rotate(225)"/><rect x="-3.200" y="-13" width="6.400" height="7" fill="#afb1b3" transform="rotate(270)"/><rect x="-3.200" y="-13" width="6.400" height="7" fill="#afb1b3" transform="rotate(315)"/><circle r="9.200" fill="#afb1b3"/><circle r="4.200" fill="#3c3f41"/></g></svg>
<div class="r" style="left:500.00px;top:82.50px;width:24.00px;height:3.00px;background:#afb1b3;"></div>
<div class="r" style="left:42.00px;top:392.00px;width:496.00px;height:40.00px;background:#0d293e;"></div>
<svg class="r" style="left:55.00px;top:125.50px;" width="20" height="13" viewBox="0 0 20 13"><polyline points="1.200,1.500 10,10.500 18.800,1.500" fill="none" stroke="#afb1b3" stroke-width="2.600"/></svg>
<svg class="r" style="left:92.00px;top:120.00px;" width="28" height="22" viewBox="0 0 28 22"><path d="M0,0H10.500L14.500,5.500H28V22H0Z" fill="#8a979f"/></svg>
<div class="r" style="left:108.50px;top:134.50px;width:15.00px;height:15.00px;background:#3c3f41;"></div>
<div class="r" style="left:110.00px;top:136.00px;width:12.00px;height:12.00px;background:#40b6e0;"></div>
<div class="t" style="left:127.25px;top:120.14px;font:27px/27px 'Liberation Sans',sans-serif;font-weight:bold;letter-spacing:1.188px;color:#bbbbbb;">lab24</div>
<div class="r" style="left:0;top:0;width:538px;height:1800px;overflow:hidden;background:none"><div class="t" style="left:214.25px;top:120.14px;font:27px/27px 'Liberation Sans',sans-serif;letter-spacing:0.480px;color:#7f8182;">sources root, ~/cs61bl/su2</div></div>
<svg class="r" style="left:94.00px;top:162.00px;" width="13" height="20" viewBox="0 0 13 20"><polyline points="1.500,1.200 10.500,10 1.500,18.800" fill="none" stroke="#afb1b3" stroke-width="2.600"/></svg>
<svg class="r" style="left:128.00px;top:160.00px;" width="28" height="22" viewBox="0 0 28 22"><path d="M0,0H10.500L14.500,5.500H28V22H0Z" fill="#8a979f"/></svg>
<div class="t" style="left:163.10px;top:160.14px;font:27px/27px 'Liberation Sans',sans-serif;letter-spacing:0.225px;color:#a09f00;">.idea</div>
<svg class="r" style="left:91.00px;top:205.50px;" width="20" height="13" viewBox="0 0 20 13"><polyline points="1.200,1.500 10,10.500 18.800,1.500" fill="none" stroke="#afb1b3" stroke-width="2.600"/></svg>
<svg class="r" style="left:128.00px;top:200.00px;" width="28" height="22" viewBox="0 0 28 22"><path d="M0,0H10.500L14.500,5.500H28V22H0Z" fill="#8a979f"/><circle cx="9.800" cy="13.200" r="4" fill="#3c3f41"/></svg>
<div class="t" style="left:163.25px;top:200.14px;font:27px/27px 'Liberation Sans',sans-serif;letter-spacing:1.150px;color:#bbbbbb;">inputs</div>
<svg class="r" style="left:168.00px;top:238.50px;" width="20" height="27.5" viewBox="0 0 20 27.5"><path d="M9.500,0H20V27.500H0V9.500H9.500Z" fill="#8a979f"/><path d="M0,7.500L7.500,0V7.500Z" fill="#8a979f"/><path d="M3.800,14H16.200M3.800,17.600H16.200M3.800,21.200H12.500" stroke="#3c3f41" stroke-width="2" fill="none"/></svg>
<div class="t" style="left:200.00px;top:240.14px;font:27px/27px 'Liberation Sans',sans-serif;letter-spacing:0.489px;color:#62a65a;">graphTestAllDisjoint.in</div>
<svg class="r" style="left:168.00px;top:278.50px;" width="20" height="27.5" viewBox="0 0 20 27.5"><path d="M9.500,0H20V27.500H0V9.500H9.500Z" fill="#8a979f"/><path d="M0,7.500L7.500,0V7.500Z" fill="#8a979f"/><path d="M3.800,14H16.200M3.800,17.600H16.200M3.800,21.200H12.500" stroke="#3c3f41" stroke-width="2" fill="none"/></svg>
<div class="t" style="left:200.00px;top:280.14px;font:27px/27px 'Liberation Sans',sans-serif;letter-spacing:0.425px;color:#62a65a;">graphTestMultiEdge.in</div>
<svg class="r" style="left:168.00px;top:318.50px;" width="20" height="27.5" viewBox="0 0 20 27.5"><path d="M9.500,0H20V27.500H0V9.500H9.500Z" fill="#8a979f"/><path d="M0,7.500L7.500,0V7.500Z" fill="#8a979f"/><path d="M3.800,14H16.200M3.800,17.600H16.200M3.800,21.200H12.500" stroke="#3c3f41" stroke-width="2" fill="none"/></svg>
<div class="t" style="left:200.00px;top:320.14px;font:27px/27px 'Liberation Sans',sans-serif;letter-spacing:0.379px;color:#62a65a;">graphTestNormal.in</div>
<svg class="r" style="left:168.00px;top:358.50px;" width="20" height="27.5" viewBox="0 0 20 27.5"><path d="M9.500,0H20V27.500H0V9.500H9.500Z" fill="#8a979f"/><path d="M0,7.500L7.500,0V7.500Z" fill="#8a979f"/><path d="M3.800,14H16.200M3.800,17.600H16.200M3.800,21.200H12.500" stroke="#3c3f41" stroke-width="2" fill="none"/></svg>
<div class="t" style="left:200.00px;top:360.14px;font:27px/27px 'Liberation Sans',sans-serif;letter-spacing:0.387px;color:#62a65a;">graphTestSomeDisjoint.in</div>
<svg class="r" style="left:94.00px;top:402.00px;" width="13" height="20" viewBox="0 0 13 20"><polyline points="1.500,1.200 10.500,10 1.500,18.800" fill="none" stroke="#afb1b3" stroke-width="2.600"/></svg>
<svg class="r" style="left:128.00px;top:400.00px;" width="28" height="22" viewBox="0 0 28 22"><path d="M0,0H10.500L14.500,5.500H28V22H0Z" fill="#9b4f2e"/></svg>
<div class="t" style="left:164.00px;top:400.14px;font:27px/27px 'Liberation Sans',sans-serif;letter-spacing:1.225px;color:#a09f00;">out</div>
<svg class="r" style="left:128.00px;top:438.00px;" width="28" height="28" viewBox="0 0 28 28"><circle cx="14" cy="14" r="14" fill="#3f87a3"/><path d="M17.600,11.400A4.900,5.100 0 1 0 17.600,18.400" fill="none" stroke="#263a44" stroke-width="2.200"/></svg>
<div class="t" style="left:162.75px;top:440.14px;font:27px/27px 'Liberation Sans',sans-serif;letter-spacing:0.317px;color:#62a65a;">Edge</div>
<svg class="r" style="left:128.00px;top:478.00px;" width="28" height="28" viewBox="0 0 28 28"><circle cx="14" cy="14" r="14" fill="#3f87a3"/><path d="M17.600,11.400A4.900,5.100 0 1 0 17.600,18.400" fill="none" stroke="#263a44" stroke-width="2.200"/></svg>
<div class="t" style="left:163.75px;top:480.14px;font:27px/27px 'Liberation Sans',sans-serif;letter-spacing:0.350px;color:#62a65a;">Graph</div>
<svg class="r" style="left:128.00px;top:518.00px;" width="28" height="28" viewBox="0 0 28 28"><circle cx="14" cy="14" r="14" fill="#3f87a3"/><path d="M17.600,11.400A4.900,5.100 0 1 0 17.600,18.400" fill="none" stroke="#263a44" stroke-width="2.200"/></svg>
<svg class="r" style="left:143.50px;top:514.00px;" width="15" height="11" viewBox="0 0 15 11"><path d="M0.500,5.500L6.500,0.500V10.500Z" fill="#e05a2b"/><path d="M8.500,0.500L14.500,5.500L8.500,10.500Z" fill="#56a83c"/></svg>
<div class="t" style="left:163.75px;top:520.14px;font:27px/27px 'Liberation Sans',sans-serif;letter-spacing:-0.125px;color:#62a65a;">GraphTest</div>
<svg class="r" style="left:132.00px;top:558.00px;" width="28" height="30" viewBox="0 0 28 30"><path d="M9.500,0H20V27.500H0V9.500H9.500Z" fill="#8a979f"/><path d="M0,7.500L7.500,0V7.500Z" fill="#8a979f"/><rect x="13" y="16.500" width="14" height="14" fill="#3c3f41"/><rect x="14.200" y="17.700" width="12" height="12" fill="#231f20"/><rect x="16.500" y="25.500" width="6" height="1.800" fill="#fff"/></svg>
<div class="t" style="left:163.25px;top:560.14px;font:27px/27px 'Liberation Sans',sans-serif;letter-spacing:0.888px;color:#a09f00;">lab24.iml</div>
<svg class="r" style="left:59.00px;top:602.00px;" width="13" height="20" viewBox="0 0 13 20"><polyline points="1.500,1.200 10.500,10 1.500,18.800" fill="none" stroke="#afb1b3" stroke-width="2.600"/></svg>
<svg class="r" style="left:92.00px;top:598.00px;" width="28" height="24" viewBox="0 0 28 24"><rect x="0" y="4" width="4" height="20" fill="#8a979f"/><rect x="6" y="4" width="4.500" height="20" fill="#62b543"/><rect x="12.500" y="0" width="4" height="24" fill="#8a979f"/><rect x="18.500" y="4" width="4.500" height="20" fill="#40b6e0"/><rect x="25" y="8" width="3" height="16" fill="#8a979f"/></svg>
<div class="t" style="left:126.75px;top:600.14px;font:27px/27px 'Liberation Sans',sans-serif;letter-spacing:0.426px;color:#bbbbbb;">External Libraries</div>
<svg class="r" style="left:92.00px;top:638.00px;" width="31" height="30" viewBox="0 0 31 30"><rect x="0" y="0" width="20" height="17.500" fill="#8a979f"/><path d="M2.500,3.500L8,8L2.500,12.500" stroke="#3c3f41" stroke-width="2" fill="none"/><circle cx="20" cy="19.500" r="10.800" fill="#3c3f41"/><circle cx="20" cy="19.500" r="9.600" fill="#40b6e0"/><path d="M20,13.500V20L24,23" stroke="#3c3f41" stroke-width="2.200" fill="none"/></svg>
<div class="t" style="left:127.75px;top:640.14px;font:27px/27px 'Liberation Sans',sans-serif;letter-spacing:0.357px;color:#bbbbbb;">Scratches and Consoles</div>
<svg class="r" style="left:2846.00px;top:80.00px;" width="26" height="27" viewBox="0 0 26 27"><path d="M12,3C17.500,3 20,7.500 20,12V18L23,21.500V22.500H1V21.500L4,18V12C4,7.500 6.500,3 12,3Z" fill="#afb1b3"/><path d="M8.500,24H15.500L12,26.800Z" fill="#afb1b3"/><circle cx="20.800" cy="5.200" r="6.200" fill="#3c3f41"/><circle cx="20.800" cy="5.200" r="5" fill="#d9504e"/></svg>
<div class="t" style="left:2870.47px;top:113.75px;transform-origin:0 0;transform:rotate(90deg);font:23px/23px 'Liberation Sans',sans-serif;letter-spacing:0.312px;color:#bbbbbb;">Notifications</div>
<div class="r" style="left:540px;top:168.5px;width:2298px;height:1543.5px;overflow:hidden"><div class="r" style="left:-540px;top:-168.5px;width:2880px;height:1800px">
<div class="r" style="left:803.80px;top:288.60px;width:2.00px;height:1408.00px;background:#393a3b;"></div>
<div class="r" style="left:866.20px;top:640.60px;width:2.00px;height:88.00px;background:#393a3b;"></div>
<div class="r" style="left:866.20px;top:904.60px;width:2.00px;height:88.00px;background:#393a3b;"></div>
<div class="r" style="left:866.20px;top:1168.60px;width:2.00px;height:44.00px;background:#393a3b;"></div>
<div class="r" style="left:866.20px;top:1388.60px;width:2.00px;height:44.00px;background:#393a3b;"></div>
<div class="r" style="left:866.20px;top:1608.60px;width:2.00px;height:44.00px;background:#393a3b;"></div>
<div class="r" style="left:2617.50px;top:168.50px;width:2.00px;height:1543.50px;background:#424345;"></div>
<div class="r" style="left:1010.80px;top:244.60px;width:62.40px;height:44.00px;background:#52503a;"></div>
<div class="r" style="left:1057.60px;top:376.60px;width:93.60px;height:44.00px;background:#52503a;"></div>
<div class="r" style="left:1244.80px;top:684.60px;width:140.40px;height:44.00px;background:#52503a;"></div>
<div class="c ln" style="left:548.00px;top:159.10px;color:#606366">124</div>
<div class="c" style="left:808.00px;top:159.10px;color:#a9b7c6">}</div>
<div class="t" style="left:807.00px;top:211.94px;font:25px/25px 'Liberation Sans',sans-serif;letter-spacing:0.321px;color:#7a7a7a;">3 usages</div>
<div class="c ln" style="left:548.00px;top:247.10px;color:#606366">125</div>
<div class="c" style="left:808.00px;top:247.10px;color:#cc7832">public class</div>
<div class="c" style="left:1010.80px;top:247.10px;color:#a9b7c6">pair</div>
<div class="c" style="left:1088.80px;top:247.10px;color:#cc7832">implements</div>
<div class="c" style="left:1260.40px;top:247.10px;color:#a9b7c6">Comparable&lt;pair&gt; {</div>
<div class="c ln" style="left:548.00px;top:291.10px;color:#606366">126</div>
<div class="t" style="left:869.90px;top:343.94px;font:25px/25px 'Liberation Sans',sans-serif;letter-spacing:0.250px;color:#7a7a7a;">4 usages</div>
<div class="c ln" style="left:548.00px;top:379.10px;color:#606366">127</div>
<div class="c" style="left:870.40px;top:379.10px;color:#cc7832">private int</div>
<div class="c" style="left:1057.60px;top:379.10px;color:#9876aa">vertex</div>
<div class="c" style="left:1151.20px;top:379.10px;color:#cc7832">;</div>
<div class="t" style="left:869.40px;top:431.94px;font:25px/25px 'Liberation Sans',sans-serif;letter-spacing:0.321px;color:#7a7a7a;">3 usages</div>
<div class="c ln" style="left:548.00px;top:467.10px;color:#606366">128</div>
<div class="c" style="left:870.40px;top:467.10px;color:#cc7832">private int</div>
<div class="c" style="left:1057.60px;top:467.10px;color:#9876aa">dist</div>
<div class="c" style="left:1120.00px;top:467.10px;color:#cc7832">;</div>
<div class="c ln" style="left:548.00px;top:511.10px;color:#606366">129</div>
<div class="t" style="left:868.65px;top:563.94px;font:25px/25px 'Liberation Sans',sans-serif;letter-spacing:0.500px;color:#7a7a7a;">1 usage</div>
<div class="c ln" style="left:548.00px;top:599.10px;color:#606366">130</div>
<div class="c" style="left:870.40px;top:599.10px;color:#cc7832">public</div>
<div class="c" style="left:979.60px;top:599.10px;color:#ffc66d">pair</div>
<div class="c" style="left:1057.60px;top:599.10px;color:#a9b7c6">(</div>
<div class="c" style="left:1073.20px;top:599.10px;color:#cc7832">int</div>
<div class="c" style="left:1135.60px;top:599.10px;color:#a9b7c6">vertex) {</div>
<div class="c ln" style="left:548.00px;top:643.10px;color:#606366">131</div>
<div class="c" style="left:932.80px;top:643.10px;color:#cc7832">this</div>
<div class="c" style="left:995.20px;top:643.10px;color:#a9b7c6">.</div>
<div class="c" style="left:1010.80px;top:643.10px;color:#9876aa">vertex</div>
<div class="c" style="left:1120.00px;top:643.10px;color:#a9b7c6">= vertex</div>
<div class="c" style="left:1244.80px;top:643.10px;color:#cc7832">;</div>
<div class="c ln" style="left:548.00px;top:687.10px;color:#606366">132</div>
<div class="c" style="left:932.80px;top:687.10px;color:#cc7832">this</div>
<div class="c" style="left:995.20px;top:687.10px;color:#a9b7c6">.</div>
<div class="c" style="left:1010.80px;top:687.10px;color:#9876aa">dist</div>
<div class="c" style="left:1088.80px;top:687.10px;color:#a9b7c6">= Integer.</div>
<div class="c" style="left:1244.80px;top:687.10px;color:#9876aa">MAX_VALUE</div>
<div class="c" style="left:1385.20px;top:687.10px;color:#cc7832">;</div>
<div class="c" style="left:1416.40px;top:687.10px;color:#808080">//infinity</div>
<div class="c ln" style="left:548.00px;top:731.10px;color:#606366">133</div>
<div class="c" style="left:870.40px;top:731.10px;color:#a9b7c6">}</div>
<div class="c ln" style="left:548.00px;top:775.10px;color:#606366">134</div>
<div class="t" style="left:868.65px;top:827.94px;font:25px/25px 'Liberation Sans',sans-serif;letter-spacing:0.500px;color:#7a7a7a;">1 usage</div>
<div class="c ln" style="left:548.00px;top:863.10px;color:#606366">135</div>
<div class="c" style="left:870.40px;top:863.10px;color:#cc7832">public</div>
<div class="c" style="left:979.60px;top:863.10px;color:#ffc66d">pair</div>
<div class="c" style="left:1057.60px;top:863.10px;color:#a9b7c6">(</div>
<div class="c" style="left:1073.20px;top:863.10px;color:#cc7832">int</div>
<div class="c" style="left:1135.60px;top:863.10px;color:#a9b7c6">vertex</div>
<div class="c" style="left:1229.20px;top:863.10px;color:#cc7832">,</div>
<div class="c" style="left:1260.40px;top:863.10px;color:#cc7832">int</div>
<div class="c" style="left:1322.80px;top:863.10px;color:#a9b7c6">dist) {</div>
<div class="c ln" style="left:548.00px;top:907.10px;color:#606366">136</div>
<div class="c" style="left:932.80px;top:907.10px;color:#cc7832">this</div>
<div class="c" style="left:995.20px;top:907.10px;color:#a9b7c6">.</div>
<div class="c" style="left:1010.80px;top:907.10px;color:#9876aa">vertex</div>
<div class="c" style="left:1120.00px;top:907.10px;color:#a9b7c6">= vertex</div>
<div class="c" style="left:1244.80px;top:907.10px;color:#cc7832">;</div>
<div class="c ln" style="left:548.00px;top:951.10px;color:#606366">137</div>
<div class="c" style="left:932.80px;top:951.10px;color:#cc7832">this</div>
<div class="c" style="left:995.20px;top:951.10px;color:#a9b7c6">.</div>
<div class="c" style="left:1010.80px;top:951.10px;color:#9876aa">dist</div>
<div class="c" style="left:1088.80px;top:951.10px;color:#a9b7c6">= dist</div>
<div class="c" style="left:1182.40px;top:951.10px;color:#cc7832">;</div>
<div class="c ln" style="left:548.00px;top:995.10px;color:#606366">138</div>
<div class="c" style="left:870.40px;top:995.10px;color:#a9b7c6">}</div>
<div class="c ln" style="left:548.00px;top:1039.10px;color:#606366">139</div>
<div class="t" style="left:868.65px;top:1091.94px;font:25px/25px 'Liberation Sans',sans-serif;letter-spacing:0.500px;color:#7a7a7a;">1 usage</div>
<div class="c ln" style="left:548.00px;top:1127.10px;color:#606366">140</div>
<div class="c" style="left:870.40px;top:1127.10px;color:#cc7832">public void</div>
<div class="c" style="left:1057.60px;top:1127.10px;color:#ffc66d">setDist</div>
<div class="c" style="left:1182.40px;top:1127.10px;color:#a9b7c6">(</div>
<div class="c" style="left:1198.00px;top:1127.10px;color:#cc7832">int</div>
<div class="c" style="left:1260.40px;top:1127.10px;color:#a9b7c6">dist) {</div>
<div class="c ln" style="left:548.00px;top:1171.10px;color:#606366">141</div>
<div class="c" style="left:932.80px;top:1171.10px;color:#cc7832">this</div>
<div class="c" style="left:995.20px;top:1171.10px;color:#a9b7c6">.</div>
<div class="c" style="left:1010.80px;top:1171.10px;color:#9876aa">dist</div>
<div class="c" style="left:1088.80px;top:1171.10px;color:#a9b7c6">= dist</div>
<div class="c" style="left:1182.40px;top:1171.10px;color:#cc7832">;</div>
<div class="c ln" style="left:548.00px;top:1215.10px;color:#606366">142</div>
<div class="c" style="left:870.40px;top:1215.10px;color:#a9b7c6">}</div>
<div class="c ln" style="left:548.00px;top:1259.10px;color:#606366">143</div>
<div class="t" style="left:869.40px;top:1311.94px;font:25px/25px 'Liberation Sans',sans-serif;letter-spacing:0.321px;color:#7a7a7a;">3 usages</div>
<div class="c ln" style="left:548.00px;top:1347.10px;color:#606366">144</div>
<div class="c" style="left:870.40px;top:1347.10px;color:#cc7832">public int</div>
<div class="c" style="left:1042.00px;top:1347.10px;color:#ffc66d">getDist</div>
<div class="c" style="left:1166.80px;top:1347.10px;color:#a9b7c6">() {</div>
<div class="c ln" style="left:548.00px;top:1391.10px;color:#606366">145</div>
<div class="c" style="left:932.80px;top:1391.10px;color:#cc7832">return this</div>
<div class="c" style="left:1104.40px;top:1391.10px;color:#a9b7c6">.</div>
<div class="c" style="left:1120.00px;top:1391.10px;color:#9876aa">dist</div>
<div class="c" style="left:1182.40px;top:1391.10px;color:#cc7832">;</div>
<div class="c ln" style="left:548.00px;top:1435.10px;color:#606366">146</div>
<div class="c" style="left:870.40px;top:1435.10px;color:#a9b7c6">}</div>
<div class="c ln" style="left:548.00px;top:1479.10px;color:#606366">147</div>
<div class="c" style="left:870.40px;top:1479.10px;color:#808080">//</div>
<div class="t" style="left:869.40px;top:1531.94px;font:25px/25px 'Liberation Sans',sans-serif;letter-spacing:0.321px;color:#7a7a7a;">3 usages</div>
<div class="c ln" style="left:548.00px;top:1567.10px;color:#606366">148</div>
<div class="c" style="left:870.40px;top:1567.10px;color:#cc7832">public int</div>
<div class="c" style="left:1042.00px;top:1567.10px;color:#ffc66d">getVertex</div>
<div class="c" style="left:1198.00px;top:1567.10px;color:#a9b7c6">() {</div>
<div class="c ln" style="left:548.00px;top:1611.10px;color:#606366">149</div>
<div class="c" style="left:932.80px;top:1611.10px;color:#cc7832">return this</div>
<div class="c" style="left:1104.40px;top:1611.10px;color:#a9b7c6">.</div>
<div class="c" style="left:1120.00px;top:1611.10px;color:#9876aa">vertex</div>
<div class="c" style="left:1213.60px;top:1611.10px;color:#cc7832">;</div>
<div class="c ln" style="left:548.00px;top:1655.10px;color:#606366">150</div>
<div class="c" style="left:870.40px;top:1655.10px;color:#a9b7c6">}</div>
<div class="c ln" style="left:548.00px;top:1699.10px;color:#606366">151</div>
<svg class="r" style="left:722.75px;top:258.1px;" width="22" height="26" viewBox="722.75 258.1 22 26"><path d="M725.85,260.70H741.65V274.10L733.75,281.50L725.85,274.10Z" fill="#2b2b2b" stroke="#58595b" stroke-width="2"/><path d="M728.95,268.50H738.55" stroke="#58595b" stroke-width="2"/></svg>
<svg class="r" style="left:722.75px;top:610.1px;" width="22" height="26" viewBox="722.75 610.1 22 26"><path d="M725.85,612.70H741.65V626.10L733.75,633.50L725.85,626.10Z" fill="#2b2b2b" stroke="#58595b" stroke-width="2"/><path d="M728.95,620.50H738.55" stroke="#58595b" stroke-width="2"/></svg>
<svg class="r" style="left:722.75px;top:736.1px;" width="22" height="28" viewBox="722.75 736.1 22 28"><path d="M725.85,760.00H741.65V746.10L733.75,738.50L725.85,746.10Z" fill="#2b2b2b" stroke="#58595b" stroke-width="2"/><path d="M728.95,752.80H738.55" stroke="#58595b" stroke-width="2"/></svg>
<svg class="r" style="left:722.75px;top:874.1px;" width="22" height="26" viewBox="722.75 874.1 22 26"><path d="M725.85,876.70H741.65V890.10L733.75,897.50L725.85,890.10Z" fill="#2b2b2b" stroke="#58595b" stroke-width="2"/><path d="M728.95,884.50H738.55" stroke="#58595b" stroke-width="2"/></svg>
<svg class="r" style="left:722.75px;top:1000.1px;" width="22" height="28" viewBox="722.75 1000.1 22 28"><path d="M725.85,1024.00H741.65V1010.10L733.75,1002.50L725.85,1010.10Z" fill="#2b2b2b" stroke="#58595b" stroke-width="2"/><path d="M728.95,1016.80H738.55" stroke="#58595b" stroke-width="2"/></svg>
<svg class="r" style="left:722.75px;top:1138.1px;" width="22" height="26" viewBox="722.75 1138.1 22 26"><path d="M725.85,1140.70H741.65V1154.10L733.75,1161.50L725.85,1154.10Z" fill="#2b2b2b" stroke="#58595b" stroke-width="2"/><path d="M728.95,1148.50H738.55" stroke="#58595b" stroke-width="2"/></svg>
<svg class="r" style="left:722.75px;top:1220.1px;" width="22" height="28" viewBox="722.75 1220.1 22 28"><path d="M725.85,1244.00H741.65V1230.10L733.75,1222.50L725.85,1230.10Z" fill="#2b2b2b" stroke="#58595b" stroke-width="2"/><path d="M728.95,1236.80H738.55" stroke="#58595b" stroke-width="2"/></svg>
<svg class="r" style="left:722.75px;top:1358.1px;" width="22" height="26" viewBox="722.75 1358.1 22 26"><path d="M725.85,1360.70H741.65V1374.10L733.75,1381.50L725.85,1374.10Z" fill="#2b2b2b" stroke="#58595b" stroke-width="2"/><path d="M728.95,1368.50H738.55" stroke="#58595b" stroke-width="2"/></svg>
<svg class="r" style="left:722.75px;top:1440.1px;" width="22" height="28" viewBox="722.75 1440.1 22 28"><path d="M725.85,1464.00H741.65V1450.10L733.75,1442.50L725.85,1450.10Z" fill="#2b2b2b" stroke="#58595b" stroke-width="2"/><path d="M728.95,1456.80H738.55" stroke="#58595b" stroke-width="2"/></svg>
<svg class="r" style="left:722.75px;top:1578.1px;" width="22" height="26" viewBox="722.75 1578.1 22 26"><path d="M725.85,1580.70H741.65V1594.10L733.75,1601.50L725.85,1594.10Z" fill="#2b2b2b" stroke="#58595b" stroke-width="2"/><path d="M728.95,1588.50H738.55" stroke="#58595b" stroke-width="2"/></svg>
<svg class="r" style="left:722.75px;top:1660.1px;" width="22" height="28" viewBox="722.75 1660.1 22 28"><path d="M725.85,1684.00H741.65V1670.10L733.75,1662.50L725.85,1670.10Z" fill="#2b2b2b" stroke="#58595b" stroke-width="2"/><path d="M728.95,1676.80H738.55" stroke="#58595b" stroke-width="2"/></svg>
<div class="r" style="left:2612.00px;top:176.00px;width:12.00px;height:42.00px;background:#2b2b2b;"></div>
<svg class="r" style="left:2623.00px;top:184.00px;" width="26" height="23" viewBox="0 0 26 23"><path d="M13,0.500L25.500,22.500H0.500Z" fill="#c4941a"/><path d="M13,8V15.500M13,17.500V20.500" stroke="#2b2b2b" stroke-width="3.200"/></svg>
<div class="t" style="left:2653.60px;top:184.34px;font:25px/25px 'Liberation Sans',sans-serif;letter-spacing:0.150px;color:#bbbbbb;">34</div>
<svg class="r" style="left:2697.00px;top:183.00px;" width="26" height="29" viewBox="0 0 26 29"><path d="M3,11L9.500,17L23,3" stroke="#499c54" stroke-width="4.400" fill="none"/><path d="M1.500,26.500L6,22.500L10.500,26.500L15,22.500L19.500,26.500L23.500,22.500" stroke="#499c54" stroke-width="1.800" fill="none"/></svg>
<div class="t" style="left:2728.00px;top:184.34px;font:25px/25px 'Liberation Sans',sans-serif;letter-spacing:0.000px;color:#bbbbbb;">3</div>
<svg class="r" style="left:2762.00px;top:189.00px;" width="20" height="13" viewBox="0 0 20 13"><polyline points="1.500,11 10,2.500 18.500,11" fill="none" stroke="#afb1b3" stroke-width="2.800"/></svg>
<svg class="r" style="left:2804.00px;top:191.00px;" width="20" height="13" viewBox="0 0 20 13"><polyline points="1.500,2 10,10.500 18.500,2" fill="none" stroke="#afb1b3" stroke-width="2.800"/></svg>
<div class="r" style="left:2810.00px;top:276.00px;width:28.00px;height:4.00px;background:#be9117;"></div>
<div class="r" style="left:2810.00px;top:292.00px;width:28.00px;height:4.00px;background:#be9117;"></div>
<div class="r" style="left:2810.00px;top:308.00px;width:28.00px;height:4.00px;background:#be9117;"></div>
<div class="r" style="left:2810.00px;top:332.00px;width:28.00px;height:4.00px;background:#be9117;"></div>
<div class="r" style="left:2810.00px;top:358.00px;width:28.00px;height:4.00px;background:#be9117;"></div>
<div class="r" style="left:2810.00px;top:378.00px;width:28.00px;height:4.00px;background:#be9117;"></div>
<div class="r" style="left:2810.00px;top:398.00px;width:28.00px;height:4.00px;background:#be9117;"></div>
<div class="r" style="left:2810.00px;top:480.00px;width:28.00px;height:4.00px;background:#be9117;"></div>
<div class="r" style="left:2810.00px;top:516.00px;width:28.00px;height:4.00px;background:#be9117;"></div>
<div class="r" style="left:2810.00px;top:542.00px;width:28.00px;height:4.00px;background:#be9117;"></div>
<div class="r" style="left:2810.00px;top:556.00px;width:28.00px;height:4.00px;background:#be9117;"></div>
<div class="r" style="left:2810.00px;top:572.00px;width:28.00px;height:4.00px;background:#be9117;"></div>
<div class="r" style="left:2810.00px;top:644.00px;width:28.00px;height:4.00px;background:#be9117;"></div>
<div class="r" style="left:2810.00px;top:704.00px;width:28.00px;height:4.00px;background:#be9117;"></div>
<div class="r" style="left:2810.00px;top:810.00px;width:28.00px;height:4.00px;background:#be9117;"></div>
<div class="r" style="left:2810.00px;top:826.00px;width:28.00px;height:4.00px;background:#be9117;"></div>
<div class="r" style="left:2810.00px;top:862.00px;width:28.00px;height:4.00px;background:#0a7b1e;"></div>
<div class="r" style="left:2810.00px;top:1000.00px;width:28.00px;height:4.00px;background:#be9117;"></div>
<div class="r" style="left:2810.00px;top:1060.00px;width:28.00px;height:4.00px;background:#be9117;"></div>
<div class="r" style="left:2810.00px;top:1070.00px;width:28.00px;height:4.00px;background:#be9117;"></div>
<div class="r" style="left:2810.00px;top:1080.00px;width:28.00px;height:4.00px;background:#be9117;"></div>
<div class="r" style="left:2810.00px;top:1100.00px;width:28.00px;height:4.00px;background:#be9117;"></div>
<div class="r" style="left:2810.00px;top:1110.00px;width:28.00px;height:4.00px;background:#be9117;"></div>
<div class="r" style="left:2810.00px;top:1132.00px;width:28.00px;height:4.00px;background:#be9117;"></div>
<div class="r" style="left:2810.00px;top:1178.00px;width:28.00px;height:4.00px;background:#be9117;"></div>
<div class="r" style="left:2810.00px;top:1212.00px;width:28.00px;height:4.00px;background:#0a7b1e;"></div>
<div class="r" style="left:2810.00px;top:1232.00px;width:28.00px;height:4.00px;background:#6e4a3a;"></div>
<div class="r" style="left:2810.00px;top:1248.00px;width:28.00px;height:4.00px;background:#be9117;"></div>
<div class="r" style="left:2810.00px;top:1390.00px;width:28.00px;height:4.00px;background:#6e4a3a;"></div>
<div class="r" style="left:2810.00px;top:1406.00px;width:28.00px;height:4.00px;background:#be9117;"></div>
<div class="r" style="left:2810.00px;top:1436.00px;width:28.00px;height:4.00px;background:#be9117;"></div>
<div class="r" style="left:2810.00px;top:1442.00px;width:28.00px;height:4.00px;background:#1a8fd0;"></div>
<div class="r" style="left:2810.00px;top:1472.00px;width:28.00px;height:4.00px;background:#be9117;"></div>
<div class="r" style="left:2810.00px;top:1558.00px;width:28.00px;height:4.00px;background:#be9117;"></div>
<div class="r" style="left:2810.00px;top:430.00px;width:28.00px;height:8.00px;background:#be9117;"></div>
<div class="r" style="left:2810.00px;top:1086.00px;width:28.00px;height:8.00px;background:#be9117;"></div>
<div class="r" style="left:2818px;top:860px;width:14px;height:170px;border-radius:7px;background:rgba(130,130,130,0.45)"></div>
</div></div>
<svg class="r" style="left:62px;top:1722px;" width="26" height="30" viewBox="62 1722 26 30"><circle cx="69.8" cy="1728.6" r="3.6" fill="#afb1b3"/><circle cx="69.8" cy="1745.8" r="3.6" fill="#afb1b3"/><circle cx="80.2" cy="1733.4" r="3.6" fill="#afb1b3"/><path d="M69.8,1728.6V1745.8M80.2,1733.4V1735.5Q80.2,1741 70.5,1741.8" stroke="#afb1b3" stroke-width="3" fill="none"/></svg>
<div class="t" style="left:96.00px;top:1725.98px;font:22px/22px 'Liberation Sans',sans-serif;letter-spacing:0.000px;color:#bbbbbb;">Git</div>
<svg class="r" style="left:167.50px;top:1727.00px;" width="17" height="20" viewBox="0 0 17 20"><path d="M0,0L16.500,9.800L0,19.500Z" fill="#afb1b3"/></svg>
<div class="t" style="left:197.25px;top:1725.98px;font:22px/22px 'Liberation Sans',sans-serif;letter-spacing:0.000px;color:#bbbbbb;">Run</div>
<svg class="r" style="left:276px;top:1722px;" width="26" height="28" viewBox="276 1722 26 28"><path d="M279,1734H299M279,1739.3H299M279.5,1744.6H298.5" stroke="#afb1b3" stroke-width="2.5" fill="none"/><ellipse cx="289" cy="1738.6" rx="8.7" ry="10.6" fill="#3c3f41"/><ellipse cx="289" cy="1738.6" rx="7.4" ry="9.3" fill="#afb1b3"/><path d="M283.8,1726L287.4,1730.5M294.2,1726L290.6,1730.5" stroke="#afb1b3" stroke-width="2.4" fill="none"/></svg>
<div class="t" style="left:309.25px;top:1725.98px;font:22px/22px 'Liberation Sans',sans-serif;letter-spacing:0.875px;color:#bbbbbb;">Debug</div>
<svg class="r" style="left:418px;top:1724px;" width="24" height="26" viewBox="418 1724 24 26"><path d="M420,1730.2H424M426.2,1730.2H440M420,1736.5H424M426.2,1736.5H440M420,1742.8H424M426.2,1742.8H440" stroke="#afb1b3" stroke-width="3.4" fill="none"/></svg>
<div class="t" style="left:450.50px;top:1725.98px;font:22px/22px 'Liberation Sans',sans-serif;letter-spacing:-0.500px;color:#bbbbbb;">TODO</div>
<svg class="r" style="left:554.50px;top:1725.50px;" width="21" height="21" viewBox="0 0 21 21"><circle cx="10.500" cy="10.500" r="10.500" fill="#afb1b3"/><path d="M10.500,4.500V12M10.500,14.200V17" stroke="#3c3f41" stroke-width="3.200"/></svg>
<div class="t" style="left:585.25px;top:1725.98px;font:22px/22px 'Liberation Sans',sans-serif;letter-spacing:0.429px;color:#bbbbbb;">Problems</div>
<svg class="r" style="left:726.00px;top:1726.00px;" width="22" height="20" viewBox="0 0 22 20"><rect width="22" height="19.500" fill="#afb1b3"/><path d="M3.500,4L9,9L3.500,14" stroke="#3c3f41" stroke-width="2.200" fill="none"/><path d="M10.500,14.500H18" stroke="#3c3f41" stroke-width="2.200"/></svg>
<div class="t" style="left:759.00px;top:1725.98px;font:22px/22px 'Liberation Sans',sans-serif;letter-spacing:0.250px;color:#bbbbbb;">Terminal</div>
<svg class="r" style="left:892.00px;top:1724.00px;" width="24" height="24" viewBox="0 0 24 24"><rect width="24" height="24" rx="2.500" fill="#6b6d6f"/><path d="M9,5.500H5.500V18.500H9M15,5.500H18.500V18.500H15" stroke="#3c3f41" stroke-width="2.600" fill="none"/></svg>
<div class="t" style="left:927.00px;top:1725.98px;font:22px/22px 'Liberation Sans',sans-serif;letter-spacing:0.458px;color:#bbbbbb;">Style Checker</div>
<svg class="r" style="left:1119.00px;top:1724.00px;" width="24" height="25" viewBox="0 0 24 25"><path d="M12,1L23,7L12,13L1,7Z" fill="#afb1b3"/><path d="M2.500,12L12,17.200L21.500,12M2.500,17L12,22.200L21.500,17" stroke="#afb1b3" stroke-width="2.400" fill="none"/></svg>
<div class="t" style="left:1150.25px;top:1725.98px;font:22px/22px 'Liberation Sans',sans-serif;letter-spacing:0.304px;color:#bbbbbb;">Python Packages</div>
<svg class="r" style="left:1372.00px;top:1723.00px;" width="26" height="26" viewBox="0 0 26 26"><path d="M7,1.500H19L25.500,13L19,24.500H7L0.500,13Z" fill="#afb1b3"/><path d="M9.500,7L19,13L9.500,19Z" fill="#3c3f41"/></svg>
<div class="t" style="left:1405.00px;top:1725.98px;font:22px/22px 'Liberation Sans',sans-serif;letter-spacing:0.500px;color:#bbbbbb;">Services</div>
<svg class="r" style="left:1531.00px;top:1723.00px;" width="27" height="26" viewBox="0 0 27 26"><path d="M2,8.500L12.500,2.500" stroke="#afb1b3" stroke-width="5.200" fill="none"/><path d="M9.500,7.500L24.500,23" stroke="#afb1b3" stroke-width="4.400" fill="none"/></svg>
<div class="t" style="left:1564.25px;top:1725.98px;font:22px/22px 'Liberation Sans',sans-serif;letter-spacing:1.062px;color:#bbbbbb;">Build</div>
<svg class="r" style="left:12.00px;top:1768.00px;" width="24" height="24" viewBox="0 0 24 24"><path d="M5.500,1H23V18.500H5.500Z" fill="none" stroke="#afb1b3" stroke-width="2"/><path d="M1,5.500V23H18.500" fill="none" stroke="#afb1b3" stroke-width="2"/></svg>
<div class="t" style="left:62.50px;top:1768.83px;font:23px/23px 'Liberation Sans',sans-serif;letter-spacing:-0.276px;color:#bbbbbb;">Tests passed: 1 (a minute ago)</div>
<div class="t" style="left:2288.25px;top:1768.83px;font:23px/23px 'Liberation Sans',sans-serif;letter-spacing:0.400px;color:#bbbbbb;">192:39</div>
<div class="t" style="left:2382.75px;top:1768.83px;font:23px/23px 'Liberation Sans',sans-serif;letter-spacing:-0.750px;color:#bbbbbb;">LF</div>
<div class="t" style="left:2430.75px;top:1768.83px;font:23px/23px 'Liberation Sans',sans-serif;letter-spacing:0.562px;color:#bbbbbb;">UTF-8</div>
<div class="t" style="left:2522.00px;top:1768.83px;font:23px/23px 'Liberation Sans',sans-serif;letter-spacing:-0.036px;color:#bbbbbb;">4 spaces</div>
<svg class="r" style="left:2638.00px;top:1766.00px;" width="28" height="24" viewBox="0 0 28 24"><path d="M14,0.500L27.500,23.500H0.500Z" fill="#e0a83a"/><path d="M14,8V16M14,18.200V21.200" stroke="#3c3f41" stroke-width="3.400"/></svg>
<div class="t" style="left:2671.25px;top:1768.83px;font:23px/23px 'Liberation Sans',sans-serif;letter-spacing:0.000px;color:#bbbbbb;">Merging main</div>
<svg class="r" style="left:2830.00px;top:1764.00px;" width="24" height="26" viewBox="0 0 24 26"><path d="M3,2H9V8" stroke="#afb1b3" stroke-width="2" fill="none"/><rect x="7" y="10" width="15" height="14" fill="#afb1b3"/></svg></div></div></div>
</body></html>
